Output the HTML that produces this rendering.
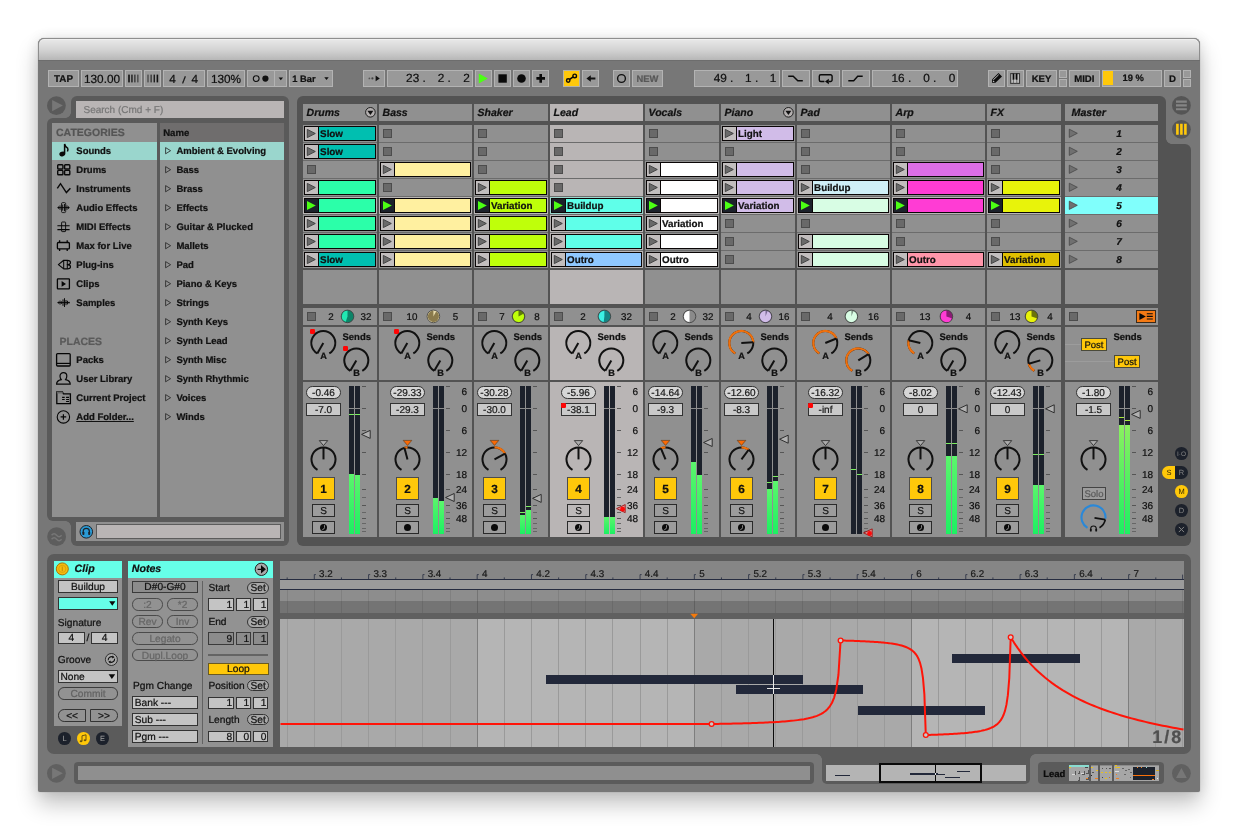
<!DOCTYPE html>
<html lang="en"><head><meta charset="utf-8"><title>Live Set</title>
<style>
html,body{margin:0;padding:0;background:#fff}
#root{position:relative;width:1238px;height:831px;overflow:hidden;background:#fff;will-change:transform;text-rendering:geometricPrecision;font-family:"Liberation Sans",sans-serif;color:#111}
#root div{position:absolute}
#win{left:38.4px;top:38px;width:1161.2px;height:754.3px;background:#777777;border-radius:6px 6px 2.5px 2.5px;box-shadow:0 12px 22px rgba(0,0,0,.24),0 0 14px rgba(0,0,0,.09),0 0 1px rgba(0,0,0,.45)}
#title{left:38.4px;top:38px;width:1161.2px;height:22.2px;border-radius:6px 6px 0 0;background:linear-gradient(#e9e9e9,#d4d4d4 50%,#b7b7b7);box-shadow:inset 0 1px 0 #efefef,0 0.8px 0 #6a6a6a;border:1px solid #8e8e8e;border-bottom:none;box-sizing:border-box}
.tb{background:#999;border:1px solid #b3b3b3;box-sizing:border-box}
.t{height:20px;line-height:20px;white-space:nowrap;-webkit-text-stroke:.22px}
.c{text-align:center}
.r{text-align:right}
svg{position:absolute;left:0;top:0}
</style></head><body>
<div id="root">
<div id="win"></div>
<div id="title"></div>
<div class="tb" style="left:48px;top:70.2px;width:31px;height:16.4px;"></div>
<div class="t c" style="left:48px;width:31px;top:70px;font-weight:bold;font-size:9.8px">TAP</div>
<div class="tb" style="left:81px;top:70.2px;width:42px;height:16.4px;"></div>
<div class="t c" style="left:81px;width:42px;top:69px;font-size:11.8px">130.00</div>
<div class="tb" style="left:125px;top:70.2px;width:17px;height:16.4px;"></div>
<div class="tb" style="left:144.4px;top:70.2px;width:16.6px;height:16.4px;"></div>
<div class="tb" style="left:163px;top:70.2px;width:41.5px;height:16.4px;"></div>
<div class="t c" style="left:163px;width:41.5px;top:69px;font-size:11.8px">4&nbsp;&nbsp;<span style="font-size:9px;font-style:italic;font-weight:bold">/</span>&nbsp;&nbsp;4</div>
<div class="tb" style="left:207px;top:70.2px;width:38px;height:16.4px;"></div>
<div class="t c" style="left:207px;width:38px;top:69px;font-size:11.8px">130%</div>
<div class="tb" style="left:247px;top:70.2px;width:28px;height:16.4px;"></div>
<div class="tb" style="left:275px;top:70.2px;width:11.5px;height:16.4px;border-left:none"></div>
<div class="tb" style="left:288.6px;top:70.2px;width:44.4px;height:16.4px;"></div>
<div class="t" style="left:292.3px;top:69px;font-weight:bold;font-size:9.3px">1 Bar</div>
<div class="tb" style="left:363.2px;top:70.2px;width:21.5px;height:16.4px;"></div>
<div class="tb" style="left:387px;top:70.2px;width:86px;height:16.4px;"></div>
<div class="t r" style="left:225.8px;width:200px;top:68px;font-size:11.8px">23 .</div>
<div class="t r" style="left:250.9px;width:200px;top:68px;font-size:11.8px">2 .</div>
<div class="t r" style="left:269.7px;width:200px;top:68px;font-size:11.8px">2</div>
<div class="tb" style="left:475px;top:70.2px;width:17px;height:16.4px;"></div>
<div class="tb" style="left:494px;top:70.2px;width:17px;height:16.4px;"></div>
<div class="tb" style="left:513px;top:70.2px;width:17px;height:16.4px;"></div>
<div class="tb" style="left:532px;top:70.2px;width:17px;height:16.4px;"></div>
<div class="tb" style="left:563px;top:70.2px;width:17px;height:16.4px;background:#ffc80a;border-color:#b8b4a4"></div>
<div class="tb" style="left:582px;top:70.2px;width:17px;height:16.4px;"></div>
<div class="tb" style="left:613px;top:70.2px;width:17px;height:16.4px;"></div>
<div class="tb" style="left:632px;top:70.2px;width:31px;height:16.4px;"></div>
<div class="t c" style="left:632px;width:31px;top:69px;font-weight:bold;font-size:9.4px;color:#585858">NEW</div>
<div class="tb" style="left:694px;top:70.2px;width:86px;height:16.4px;"></div>
<div class="t r" style="left:533.4px;width:200px;top:68px;font-size:11.8px">49 .</div>
<div class="t r" style="left:558.2px;width:200px;top:68px;font-size:11.8px">1 .</div>
<div class="t r" style="left:576.3px;width:200px;top:68px;font-size:11.8px">1</div>
<div class="tb" style="left:782px;top:70.2px;width:28px;height:16.4px;"></div>
<div class="tb" style="left:812.3px;top:70.2px;width:27.7px;height:16.4px;"></div>
<div class="tb" style="left:842.2px;top:70.2px;width:27.8px;height:16.4px;"></div>
<div class="tb" style="left:872px;top:70.2px;width:85.7px;height:16.4px;"></div>
<div class="t r" style="left:711.2px;width:200px;top:68px;font-size:11.8px">16 .</div>
<div class="t r" style="left:736.3px;width:200px;top:68px;font-size:11.8px">0 .</div>
<div class="t r" style="left:755.2px;width:200px;top:68px;font-size:11.8px">0</div>
<div class="tb" style="left:988.2px;top:70.2px;width:16.8px;height:16.4px;"></div>
<div class="tb" style="left:1007px;top:70.2px;width:16.8px;height:16.4px;"></div>
<div class="tb" style="left:1026px;top:70.2px;width:31px;height:16.4px;"></div>
<div class="t c" style="left:1026px;width:31px;top:70px;font-weight:bold;font-size:9.6px">KEY</div>
<div class="tb" style="left:1059px;top:70.2px;width:8px;height:7.4px;"></div>
<div class="tb" style="left:1059px;top:79.3px;width:8px;height:7.3px;"></div>
<div class="tb" style="left:1069px;top:70.2px;width:30.6px;height:16.4px;"></div>
<div class="t c" style="left:1069px;width:30.6px;top:70px;font-weight:bold;font-size:9.6px">MIDI</div>
<div class="tb" style="left:1102px;top:70.2px;width:60px;height:16.4px;"></div>
<div style="left:1103.2px;top:71.3px;width:9.8px;height:14.2px;background:#ffc80a"></div>
<div class="t c" style="left:1104.4px;width:57.6px;top:68px;font-weight:bold;font-size:9.4px">19 %</div>
<div class="tb" style="left:1163.8px;top:70.2px;width:17.2px;height:16.4px;"></div>
<div class="t c" style="left:1163.8px;width:17.2px;top:70px;font-weight:bold;font-size:9.6px">D</div>
<div class="tb" style="left:1183px;top:70.2px;width:8px;height:7.4px;"></div>
<div class="tb" style="left:1183px;top:79.3px;width:8px;height:7.3px;"></div>
<div style="left:70.8px;top:96px;width:218.2px;height:34px;background:#5a5a5a;border-radius:6px 6px 0 0"></div>
<div style="left:47px;top:117.8px;width:242px;height:403.2px;background:#5a5a5a;border-radius:6px 0 0 6px"></div>
<div style="left:70.8px;top:515px;width:218.2px;height:30.6px;background:#5a5a5a;border-radius:0 0 6px 6px"></div>
<div style="left:64.8px;top:111.8px;width:6px;height:6px;background:radial-gradient(circle at 0 0,transparent 5.6px,#5a5a5a 6.2px)"></div>
<div style="left:64.8px;top:521px;width:6px;height:6px;background:radial-gradient(circle at 0 100%,transparent 5.6px,#5a5a5a 6.2px)"></div>
<div style="left:75.7px;top:101.4px;width:208.3px;height:16.4px;background:#b9b5b5"></div>
<div class="t" style="left:83.5px;top:101px;font-size:10px;color:#777">Search (Cmd + F)</div>
<div style="left:51.5px;top:123px;width:105.5px;height:393.5px;background:#909090"></div>
<div style="left:159.7px;top:123px;width:124.3px;height:393.5px;background:#909090"></div>
<div style="left:159.7px;top:123px;width:124.3px;height:18.6px;background:#6f6d6d"></div>
<div class="t" style="left:56px;top:123px;font-weight:bold;font-size:10.5px;color:#555">CATEGORIES</div>
<div class="t" style="left:163.2px;top:124px;font-weight:bold;font-size:9.6px;color:#111">Name</div>
<div style="left:51.5px;top:142.2px;width:105.5px;height:18px;background:#9ad6cd"></div>
<div style="left:159.7px;top:142.2px;width:124.3px;height:18px;background:#9ad6cd"></div>
<div class="t" style="left:76.3px;top:142px;font-weight:bold;font-size:9.5px">Sounds</div>
<div class="t" style="left:76.3px;top:161px;font-weight:bold;font-size:9.5px">Drums</div>
<div class="t" style="left:76.3px;top:180px;font-weight:bold;font-size:9.5px">Instruments</div>
<div class="t" style="left:76.3px;top:199px;font-weight:bold;font-size:9.5px">Audio Effects</div>
<div class="t" style="left:76.3px;top:218px;font-weight:bold;font-size:9.5px">MIDI Effects</div>
<div class="t" style="left:76.3px;top:237px;font-weight:bold;font-size:9.5px">Max for Live</div>
<div class="t" style="left:76.3px;top:256px;font-weight:bold;font-size:9.5px">Plug-ins</div>
<div class="t" style="left:76.3px;top:275px;font-weight:bold;font-size:9.5px">Clips</div>
<div class="t" style="left:76.3px;top:294px;font-weight:bold;font-size:9.5px">Samples</div>
<div class="t" style="left:59.5px;top:332px;font-weight:bold;font-size:10.5px;color:#5a5a5a">PLACES</div>
<div class="t" style="left:76.3px;top:351px;font-weight:bold;font-size:9.5px">Packs</div>
<div class="t" style="left:76.3px;top:370px;font-weight:bold;font-size:9.5px">User Library</div>
<div class="t" style="left:76.3px;top:389px;font-weight:bold;font-size:9.5px">Current Project</div>
<div class="t" style="left:76.3px;top:408px;font-weight:bold;font-size:9.5px;text-decoration:underline">Add Folder...</div>
<div class="t" style="left:176.4px;top:142px;font-weight:bold;font-size:9.5px">Ambient &amp; Evolving</div>
<div class="t" style="left:176.4px;top:161px;font-weight:bold;font-size:9.5px">Bass</div>
<div class="t" style="left:176.4px;top:180px;font-weight:bold;font-size:9.5px">Brass</div>
<div class="t" style="left:176.4px;top:199px;font-weight:bold;font-size:9.5px">Effects</div>
<div class="t" style="left:176.4px;top:218px;font-weight:bold;font-size:9.5px">Guitar &amp; Plucked</div>
<div class="t" style="left:176.4px;top:237px;font-weight:bold;font-size:9.5px">Mallets</div>
<div class="t" style="left:176.4px;top:256px;font-weight:bold;font-size:9.5px">Pad</div>
<div class="t" style="left:176.4px;top:275px;font-weight:bold;font-size:9.5px">Piano &amp; Keys</div>
<div class="t" style="left:176.4px;top:294px;font-weight:bold;font-size:9.5px">Strings</div>
<div class="t" style="left:176.4px;top:313px;font-weight:bold;font-size:9.5px">Synth Keys</div>
<div class="t" style="left:176.4px;top:332px;font-weight:bold;font-size:9.5px">Synth Lead</div>
<div class="t" style="left:176.4px;top:351px;font-weight:bold;font-size:9.5px">Synth Misc</div>
<div class="t" style="left:176.4px;top:370px;font-weight:bold;font-size:9.5px">Synth Rhythmic</div>
<div class="t" style="left:176.4px;top:389px;font-weight:bold;font-size:9.5px">Voices</div>
<div class="t" style="left:176.4px;top:408px;font-weight:bold;font-size:9.5px">Winds</div>
<div style="left:76.2px;top:522.3px;width:208.1px;height:18.7px;background:#909090"></div>
<div style="left:96px;top:524.2px;width:185px;height:14.8px;background:#b9b5b5;border:1px solid #5c5c5c;box-sizing:border-box"></div>
<div style="left:297.3px;top:96px;width:868.7px;height:449.6px;background:#535353;border-radius:6px 6px 0 6px"></div>
<div style="left:1150px;top:143.7px;width:40.8px;height:401.9px;background:#535353;border-radius:0 6px 6px 0"></div>
<div style="left:1166px;top:137.7px;width:6px;height:6px;background:radial-gradient(circle at 100% 0,transparent 5.6px,#535353 6.2px)"></div>
<div style="left:303px;top:104px;width:74px;height:17px;background:#909090"></div>
<div class="t" style="left:306.6px;top:103px;font-weight:bold;font-style:italic;font-size:10.5px">Drums</div>
<div style="left:303px;top:124.6px;width:74px;height:143.4px;background:#6c6c6c"></div>
<div style="left:303px;top:124.6px;width:74px;height:17.2px;background:#909090"></div>
<div style="left:304.1px;top:125.9px;width:71.8px;height:15px;background:#0a0606"></div>
<div style="left:305.1px;top:126.9px;width:13px;height:13px;background:#c2bebe"></div>
<div style="left:318.9px;top:126.9px;width:56.1px;height:13px;background:#00bfb0"></div>
<div class="t" style="left:320.1px;top:125px;font-weight:bold;font-size:9.8px;color:#111">Slow</div>
<div style="left:303px;top:142.6px;width:74px;height:17.2px;background:#909090"></div>
<div style="left:304.1px;top:143.9px;width:71.8px;height:15px;background:#0a0606"></div>
<div style="left:305.1px;top:144.9px;width:13px;height:13px;background:#c2bebe"></div>
<div style="left:318.9px;top:144.9px;width:56.1px;height:13px;background:#00bfb0"></div>
<div class="t" style="left:320.1px;top:143px;font-weight:bold;font-size:9.8px;color:#111">Slow</div>
<div style="left:303px;top:160.6px;width:74px;height:17.2px;background:#909090"></div>
<div style="left:307.4px;top:165.2px;width:8.8px;height:8.6px;background:#696969;border:1px solid #4c4c4c;box-sizing:border-box"></div>
<div style="left:303px;top:178.6px;width:74px;height:17.2px;background:#909090"></div>
<div style="left:304.1px;top:179.9px;width:71.8px;height:15px;background:#0a0606"></div>
<div style="left:305.1px;top:180.9px;width:13px;height:13px;background:#c2bebe"></div>
<div style="left:318.9px;top:180.9px;width:56.1px;height:13px;background:#2bffa9"></div>
<div style="left:303px;top:196.6px;width:74px;height:17.2px;background:#b9b5b5"></div>
<div style="left:304.1px;top:197.9px;width:71.8px;height:15px;background:#0a0606"></div>
<div style="left:305.1px;top:198.9px;width:13px;height:13px;background:#1c212b"></div>
<div style="left:318.9px;top:198.9px;width:56.1px;height:13px;background:#2bffa9"></div>
<div style="left:303px;top:214.6px;width:74px;height:17.2px;background:#909090"></div>
<div style="left:304.1px;top:215.9px;width:71.8px;height:15px;background:#0a0606"></div>
<div style="left:305.1px;top:216.9px;width:13px;height:13px;background:#c2bebe"></div>
<div style="left:318.9px;top:216.9px;width:56.1px;height:13px;background:#2bffa9"></div>
<div style="left:303px;top:232.6px;width:74px;height:17.2px;background:#909090"></div>
<div style="left:304.1px;top:233.9px;width:71.8px;height:15px;background:#0a0606"></div>
<div style="left:305.1px;top:234.9px;width:13px;height:13px;background:#c2bebe"></div>
<div style="left:318.9px;top:234.9px;width:56.1px;height:13px;background:#2bffa9"></div>
<div style="left:303px;top:250.6px;width:74px;height:17.2px;background:#909090"></div>
<div style="left:304.1px;top:251.9px;width:71.8px;height:15px;background:#0a0606"></div>
<div style="left:305.1px;top:252.9px;width:13px;height:13px;background:#c2bebe"></div>
<div style="left:318.9px;top:252.9px;width:56.1px;height:13px;background:#00bfb0"></div>
<div class="t" style="left:320.1px;top:251px;font-weight:bold;font-size:9.8px;color:#111">Slow</div>
<div style="left:303px;top:270.2px;width:74px;height:33.8px;background:#909090"></div>
<div style="left:303px;top:308px;width:74px;height:16.7px;background:#909090"></div>
<div style="left:307.2px;top:312.2px;width:8.8px;height:8.6px;background:#696969;border:1px solid #4c4c4c;box-sizing:border-box"></div>
<div class="t c" style="left:321px;width:20px;top:308px;font-size:9.8px">2</div>
<div class="t c" style="left:355.9px;width:20px;top:308px;font-size:9.8px">32</div>
<div style="left:303px;top:327px;width:74px;height:53px;background:#909090"></div>
<div class="t c" style="left:317.3px;width:12.4px;top:346px;font-weight:bold;font-size:9.2px">A</div>
<div class="t c" style="left:350.3px;width:12.4px;top:363px;font-weight:bold;font-size:9.2px">B</div>
<div style="left:310.1px;top:329px;width:5px;height:5px;background:#ff0505;border-radius:1.2px"></div>
<div style="left:343.1px;top:346.4px;width:5px;height:5px;background:#ff0505;border-radius:1.2px"></div>
<div class="t" style="left:342.5px;top:328px;font-weight:bold;font-size:9.5px">Sends</div>
<div style="left:303px;top:381.8px;width:74px;height:155.7px;background:#909090"></div>
<div style="left:306px;top:386px;width:35px;height:12.7px;background:#d6d6d6;border:1px solid #333;border-radius:6.4px;box-sizing:border-box"></div>
<div class="t c" style="left:306px;width:35px;top:384px;font-size:10px;color:#1a1a1a">-0.46</div>
<div style="left:306px;top:403.2px;width:35px;height:12.5px;background:#c9c9c9;border:1px solid #333;box-sizing:border-box"></div>
<div class="t c" style="left:306px;width:35px;top:401px;font-size:10px;color:#1a1a1a">-7.0</div>
<div style="left:312.2px;top:477.1px;width:22.6px;height:22.7px;background:#ffc80a;border:1px solid #4c4c4c;box-sizing:border-box"></div>
<div class="t c" style="left:312.2px;width:22.6px;top:479px;font-weight:bold;font-size:11.8px">1</div>
<div style="left:312.2px;top:504.2px;width:22.6px;height:12.6px;background:#9c9c9c;border:1px solid #2a2a2a;box-sizing:border-box"></div>
<div class="t c" style="left:312.2px;width:22.6px;top:502px;font-size:10px">S</div>
<div style="left:312.2px;top:521.1px;width:22.6px;height:12.6px;background:#9c9c9c;border:1px solid #2a2a2a;box-sizing:border-box"></div>
<div style="left:349px;top:386px;width:5px;height:148px;background:#1c212b"></div>
<div style="left:349px;top:474.2px;width:5px;height:59.8px;background:linear-gradient(#5cf56c,#1cf062)"></div>
<div style="left:349px;top:413.9px;width:5px;height:1.3px;background:#7cf060"></div>
<div style="left:355px;top:386px;width:5px;height:148px;background:#1c212b"></div>
<div style="left:355px;top:475px;width:5px;height:59px;background:linear-gradient(#5cf56c,#1cf062)"></div>
<div style="left:355px;top:413.9px;width:5px;height:1.3px;background:#7cf060"></div>
<div style="left:349px;top:408px;width:11px;height:0.9px;background:#8c8c8c"></div>
<div style="left:362px;top:386.1px;width:4px;height:1px;background:#555"></div>
<div style="left:362px;top:407.8px;width:4px;height:1px;background:#555"></div>
<div style="left:362px;top:429.7px;width:4px;height:1px;background:#555"></div>
<div style="left:362px;top:451.8px;width:4px;height:1px;background:#555"></div>
<div style="left:362px;top:473.5px;width:4px;height:1px;background:#555"></div>
<div style="left:362px;top:488.8px;width:4px;height:1px;background:#555"></div>
<div style="left:362px;top:504.5px;width:4px;height:1px;background:#555"></div>
<div style="left:362px;top:517.9px;width:4px;height:1px;background:#555"></div>
<div style="left:362px;top:497.05px;width:4px;height:0.9px;background:#666"></div>
<div style="left:362px;top:511.85px;width:4px;height:0.9px;background:#666"></div>
<div style="left:362px;top:522.95px;width:4px;height:0.9px;background:#666"></div>
<div style="left:362px;top:527.95px;width:4px;height:0.9px;background:#666"></div>
<div style="left:362px;top:530.95px;width:4px;height:0.9px;background:#666"></div>
<div style="left:379px;top:104px;width:93px;height:17px;background:#909090"></div>
<div class="t" style="left:382.6px;top:103px;font-weight:bold;font-style:italic;font-size:10.5px">Bass</div>
<div style="left:379px;top:124.6px;width:93px;height:143.4px;background:#6c6c6c"></div>
<div style="left:379px;top:124.6px;width:93px;height:17.2px;background:#909090"></div>
<div style="left:383.4px;top:129.2px;width:8.8px;height:8.6px;background:#696969;border:1px solid #4c4c4c;box-sizing:border-box"></div>
<div style="left:379px;top:142.6px;width:93px;height:17.2px;background:#909090"></div>
<div style="left:383.4px;top:147.2px;width:8.8px;height:8.6px;background:#696969;border:1px solid #4c4c4c;box-sizing:border-box"></div>
<div style="left:379px;top:160.6px;width:93px;height:17.2px;background:#909090"></div>
<div style="left:380.1px;top:161.9px;width:90.8px;height:15px;background:#0a0606"></div>
<div style="left:381.1px;top:162.9px;width:13px;height:13px;background:#c2bebe"></div>
<div style="left:394.9px;top:162.9px;width:75.1px;height:13px;background:#fff0a0"></div>
<div style="left:379px;top:178.6px;width:93px;height:17.2px;background:#909090"></div>
<div style="left:383.4px;top:183.2px;width:8.8px;height:8.6px;background:#696969;border:1px solid #4c4c4c;box-sizing:border-box"></div>
<div style="left:379px;top:196.6px;width:93px;height:17.2px;background:#b9b5b5"></div>
<div style="left:380.1px;top:197.9px;width:90.8px;height:15px;background:#0a0606"></div>
<div style="left:381.1px;top:198.9px;width:13px;height:13px;background:#1c212b"></div>
<div style="left:394.9px;top:198.9px;width:75.1px;height:13px;background:#fff0a0"></div>
<div style="left:379px;top:214.6px;width:93px;height:17.2px;background:#909090"></div>
<div style="left:380.1px;top:215.9px;width:90.8px;height:15px;background:#0a0606"></div>
<div style="left:381.1px;top:216.9px;width:13px;height:13px;background:#c2bebe"></div>
<div style="left:394.9px;top:216.9px;width:75.1px;height:13px;background:#fff0a0"></div>
<div style="left:379px;top:232.6px;width:93px;height:17.2px;background:#909090"></div>
<div style="left:380.1px;top:233.9px;width:90.8px;height:15px;background:#0a0606"></div>
<div style="left:381.1px;top:234.9px;width:13px;height:13px;background:#c2bebe"></div>
<div style="left:394.9px;top:234.9px;width:75.1px;height:13px;background:#fff0a0"></div>
<div style="left:379px;top:250.6px;width:93px;height:17.2px;background:#909090"></div>
<div style="left:380.1px;top:251.9px;width:90.8px;height:15px;background:#0a0606"></div>
<div style="left:381.1px;top:252.9px;width:13px;height:13px;background:#c2bebe"></div>
<div style="left:394.9px;top:252.9px;width:75.1px;height:13px;background:#fff0a0"></div>
<div style="left:379px;top:270.2px;width:93px;height:33.8px;background:#909090"></div>
<div style="left:379px;top:308px;width:93px;height:16.7px;background:#909090"></div>
<div style="left:383.2px;top:312.2px;width:8.8px;height:8.6px;background:#696969;border:1px solid #4c4c4c;box-sizing:border-box"></div>
<div class="t c" style="left:402px;width:20px;top:308px;font-size:9.8px">10</div>
<div class="t c" style="left:445.5px;width:20px;top:308px;font-size:9.8px">5</div>
<div style="left:379px;top:327px;width:93px;height:53px;background:#909090"></div>
<div class="t c" style="left:401.3px;width:12.4px;top:346px;font-weight:bold;font-size:9.2px">A</div>
<div class="t c" style="left:434.3px;width:12.4px;top:363px;font-weight:bold;font-size:9.2px">B</div>
<div style="left:394.1px;top:329px;width:5px;height:5px;background:#ff0505;border-radius:1.2px"></div>
<div class="t" style="left:426.5px;top:328px;font-weight:bold;font-size:9.5px">Sends</div>
<div style="left:379px;top:381.8px;width:93px;height:155.7px;background:#909090"></div>
<div style="left:390px;top:386px;width:35px;height:12.7px;background:#d6d6d6;border:1px solid #333;border-radius:6.4px;box-sizing:border-box"></div>
<div class="t c" style="left:390px;width:35px;top:384px;font-size:10px;color:#1a1a1a">-29.33</div>
<div style="left:390px;top:403.2px;width:35px;height:12.5px;background:#c9c9c9;border:1px solid #333;box-sizing:border-box"></div>
<div class="t c" style="left:390px;width:35px;top:401px;font-size:10px;color:#1a1a1a">-29.3</div>
<div style="left:396.2px;top:477.1px;width:22.6px;height:22.7px;background:#ffc80a;border:1px solid #4c4c4c;box-sizing:border-box"></div>
<div class="t c" style="left:396.2px;width:22.6px;top:479px;font-weight:bold;font-size:11.8px">2</div>
<div style="left:396.2px;top:504.2px;width:22.6px;height:12.6px;background:#9c9c9c;border:1px solid #2a2a2a;box-sizing:border-box"></div>
<div class="t c" style="left:396.2px;width:22.6px;top:502px;font-size:10px">S</div>
<div style="left:396.2px;top:521.1px;width:22.6px;height:12.6px;background:#9c9c9c;border:1px solid #2a2a2a;box-sizing:border-box"></div>
<div style="left:433px;top:386px;width:5px;height:148px;background:#1c212b"></div>
<div style="left:433px;top:498px;width:5px;height:36px;background:linear-gradient(#5cf56c,#1cf062)"></div>
<div style="left:439px;top:386px;width:5px;height:148px;background:#1c212b"></div>
<div style="left:439px;top:500.9px;width:5px;height:33.1px;background:linear-gradient(#5cf56c,#1cf062)"></div>
<div style="left:433px;top:408px;width:11px;height:0.9px;background:#8c8c8c"></div>
<div style="left:446px;top:386.1px;width:4px;height:1px;background:#555"></div>
<div style="left:446px;top:407.8px;width:4px;height:1px;background:#555"></div>
<div style="left:446px;top:429.7px;width:4px;height:1px;background:#555"></div>
<div style="left:446px;top:451.8px;width:4px;height:1px;background:#555"></div>
<div style="left:446px;top:473.5px;width:4px;height:1px;background:#555"></div>
<div style="left:446px;top:488.8px;width:4px;height:1px;background:#555"></div>
<div style="left:446px;top:504.5px;width:4px;height:1px;background:#555"></div>
<div style="left:446px;top:517.9px;width:4px;height:1px;background:#555"></div>
<div style="left:446px;top:497.05px;width:4px;height:0.9px;background:#666"></div>
<div style="left:446px;top:511.85px;width:4px;height:0.9px;background:#666"></div>
<div style="left:446px;top:522.95px;width:4px;height:0.9px;background:#666"></div>
<div style="left:446px;top:527.95px;width:4px;height:0.9px;background:#666"></div>
<div style="left:446px;top:530.95px;width:4px;height:0.9px;background:#666"></div>
<div class="t r" style="left:267px;width:200px;top:383px;font-size:10px;color:#111">6</div>
<div class="t r" style="left:267px;width:200px;top:400px;font-size:10px;color:#111">0</div>
<div class="t r" style="left:267px;width:200px;top:422px;font-size:10px;color:#111">6</div>
<div class="t r" style="left:267px;width:200px;top:444px;font-size:10px;color:#111">12</div>
<div class="t r" style="left:267px;width:200px;top:466px;font-size:10px;color:#111">18</div>
<div class="t r" style="left:267px;width:200px;top:481px;font-size:10px;color:#111">24</div>
<div class="t r" style="left:267px;width:200px;top:497px;font-size:10px;color:#111">36</div>
<div class="t r" style="left:267px;width:200px;top:510px;font-size:10px;color:#111">48</div>
<div style="left:474px;top:104px;width:74px;height:17px;background:#909090"></div>
<div class="t" style="left:477.6px;top:103px;font-weight:bold;font-style:italic;font-size:10.5px">Shaker</div>
<div style="left:474px;top:124.6px;width:74px;height:143.4px;background:#6c6c6c"></div>
<div style="left:474px;top:124.6px;width:74px;height:17.2px;background:#909090"></div>
<div style="left:478.4px;top:129.2px;width:8.8px;height:8.6px;background:#696969;border:1px solid #4c4c4c;box-sizing:border-box"></div>
<div style="left:474px;top:142.6px;width:74px;height:17.2px;background:#909090"></div>
<div style="left:478.4px;top:147.2px;width:8.8px;height:8.6px;background:#696969;border:1px solid #4c4c4c;box-sizing:border-box"></div>
<div style="left:474px;top:160.6px;width:74px;height:17.2px;background:#909090"></div>
<div style="left:478.4px;top:165.2px;width:8.8px;height:8.6px;background:#696969;border:1px solid #4c4c4c;box-sizing:border-box"></div>
<div style="left:474px;top:178.6px;width:74px;height:17.2px;background:#909090"></div>
<div style="left:475.1px;top:179.9px;width:71.8px;height:15px;background:#0a0606"></div>
<div style="left:476.1px;top:180.9px;width:13px;height:13px;background:#c2bebe"></div>
<div style="left:489.9px;top:180.9px;width:56.1px;height:13px;background:#bfff0a"></div>
<div style="left:474px;top:196.6px;width:74px;height:17.2px;background:#b9b5b5"></div>
<div style="left:475.1px;top:197.9px;width:71.8px;height:15px;background:#0a0606"></div>
<div style="left:476.1px;top:198.9px;width:13px;height:13px;background:#1c212b"></div>
<div style="left:489.9px;top:198.9px;width:56.1px;height:13px;background:#bfff0a"></div>
<div class="t" style="left:491.1px;top:197px;font-weight:bold;font-size:9.8px;color:#111">Variation</div>
<div style="left:474px;top:214.6px;width:74px;height:17.2px;background:#909090"></div>
<div style="left:475.1px;top:215.9px;width:71.8px;height:15px;background:#0a0606"></div>
<div style="left:476.1px;top:216.9px;width:13px;height:13px;background:#c2bebe"></div>
<div style="left:489.9px;top:216.9px;width:56.1px;height:13px;background:#bfff0a"></div>
<div style="left:474px;top:232.6px;width:74px;height:17.2px;background:#909090"></div>
<div style="left:475.1px;top:233.9px;width:71.8px;height:15px;background:#0a0606"></div>
<div style="left:476.1px;top:234.9px;width:13px;height:13px;background:#c2bebe"></div>
<div style="left:489.9px;top:234.9px;width:56.1px;height:13px;background:#bfff0a"></div>
<div style="left:474px;top:250.6px;width:74px;height:17.2px;background:#909090"></div>
<div style="left:475.1px;top:251.9px;width:71.8px;height:15px;background:#0a0606"></div>
<div style="left:476.1px;top:252.9px;width:13px;height:13px;background:#c2bebe"></div>
<div style="left:489.9px;top:252.9px;width:56.1px;height:13px;background:#bfff0a"></div>
<div style="left:474px;top:270.2px;width:74px;height:33.8px;background:#909090"></div>
<div style="left:474px;top:308px;width:74px;height:16.7px;background:#909090"></div>
<div style="left:478.2px;top:312.2px;width:8.8px;height:8.6px;background:#696969;border:1px solid #4c4c4c;box-sizing:border-box"></div>
<div class="t c" style="left:492px;width:20px;top:308px;font-size:9.8px">7</div>
<div class="t c" style="left:526.9px;width:20px;top:308px;font-size:9.8px">8</div>
<div style="left:474px;top:327px;width:74px;height:53px;background:#909090"></div>
<div class="t c" style="left:488.3px;width:12.4px;top:346px;font-weight:bold;font-size:9.2px">A</div>
<div class="t c" style="left:521.3px;width:12.4px;top:363px;font-weight:bold;font-size:9.2px">B</div>
<div class="t" style="left:513.5px;top:328px;font-weight:bold;font-size:9.5px">Sends</div>
<div style="left:474px;top:381.8px;width:74px;height:155.7px;background:#909090"></div>
<div style="left:477px;top:386px;width:35px;height:12.7px;background:#d6d6d6;border:1px solid #333;border-radius:6.4px;box-sizing:border-box"></div>
<div class="t c" style="left:477px;width:35px;top:384px;font-size:10px;color:#1a1a1a">-30.28</div>
<div style="left:477px;top:403.2px;width:35px;height:12.5px;background:#c9c9c9;border:1px solid #333;box-sizing:border-box"></div>
<div class="t c" style="left:477px;width:35px;top:401px;font-size:10px;color:#1a1a1a">-30.0</div>
<div style="left:483.2px;top:477.1px;width:22.6px;height:22.7px;background:#ffc80a;border:1px solid #4c4c4c;box-sizing:border-box"></div>
<div class="t c" style="left:483.2px;width:22.6px;top:479px;font-weight:bold;font-size:11.8px">3</div>
<div style="left:483.2px;top:504.2px;width:22.6px;height:12.6px;background:#9c9c9c;border:1px solid #2a2a2a;box-sizing:border-box"></div>
<div class="t c" style="left:483.2px;width:22.6px;top:502px;font-size:10px">S</div>
<div style="left:483.2px;top:521.1px;width:22.6px;height:12.6px;background:#9c9c9c;border:1px solid #2a2a2a;box-sizing:border-box"></div>
<div style="left:520px;top:386px;width:5px;height:148px;background:#1c212b"></div>
<div style="left:520px;top:515px;width:5px;height:19px;background:linear-gradient(#5cf56c,#1cf062)"></div>
<div style="left:520px;top:511.9px;width:5px;height:1.3px;background:#7cf060"></div>
<div style="left:526px;top:386px;width:5px;height:148px;background:#1c212b"></div>
<div style="left:526px;top:510px;width:5px;height:24px;background:linear-gradient(#5cf56c,#1cf062)"></div>
<div style="left:526px;top:505.8px;width:5px;height:1.3px;background:#7cf060"></div>
<div style="left:520px;top:408px;width:11px;height:0.9px;background:#8c8c8c"></div>
<div style="left:533px;top:386.1px;width:4px;height:1px;background:#555"></div>
<div style="left:533px;top:407.8px;width:4px;height:1px;background:#555"></div>
<div style="left:533px;top:429.7px;width:4px;height:1px;background:#555"></div>
<div style="left:533px;top:451.8px;width:4px;height:1px;background:#555"></div>
<div style="left:533px;top:473.5px;width:4px;height:1px;background:#555"></div>
<div style="left:533px;top:488.8px;width:4px;height:1px;background:#555"></div>
<div style="left:533px;top:504.5px;width:4px;height:1px;background:#555"></div>
<div style="left:533px;top:517.9px;width:4px;height:1px;background:#555"></div>
<div style="left:533px;top:497.05px;width:4px;height:0.9px;background:#666"></div>
<div style="left:533px;top:511.85px;width:4px;height:0.9px;background:#666"></div>
<div style="left:533px;top:522.95px;width:4px;height:0.9px;background:#666"></div>
<div style="left:533px;top:527.95px;width:4px;height:0.9px;background:#666"></div>
<div style="left:533px;top:530.95px;width:4px;height:0.9px;background:#666"></div>
<div style="left:550px;top:104px;width:93px;height:17px;background:#b9b5b5"></div>
<div class="t" style="left:553.6px;top:103px;font-weight:bold;font-style:italic;font-size:10.5px">Lead</div>
<div style="left:550px;top:124.6px;width:93px;height:143.4px;background:#6c6c6c"></div>
<div style="left:550px;top:124.6px;width:93px;height:17.2px;background:#b9b5b5"></div>
<div style="left:554.4px;top:129.2px;width:8.8px;height:8.6px;background:#696969;border:1px solid #4c4c4c;box-sizing:border-box"></div>
<div style="left:550px;top:142.6px;width:93px;height:17.2px;background:#b9b5b5"></div>
<div style="left:554.4px;top:147.2px;width:8.8px;height:8.6px;background:#696969;border:1px solid #4c4c4c;box-sizing:border-box"></div>
<div style="left:550px;top:160.6px;width:93px;height:17.2px;background:#b9b5b5"></div>
<div style="left:554.4px;top:165.2px;width:8.8px;height:8.6px;background:#696969;border:1px solid #4c4c4c;box-sizing:border-box"></div>
<div style="left:550px;top:178.6px;width:93px;height:17.2px;background:#b9b5b5"></div>
<div style="left:554.4px;top:183.2px;width:8.8px;height:8.6px;background:#696969;border:1px solid #4c4c4c;box-sizing:border-box"></div>
<div style="left:550px;top:196.6px;width:93px;height:17.2px;background:#9ad6cd"></div>
<div style="left:551.1px;top:197.9px;width:90.8px;height:15px;background:#0a0606"></div>
<div style="left:552.1px;top:198.9px;width:13px;height:13px;background:#1c212b"></div>
<div style="left:565.9px;top:198.9px;width:75.1px;height:13px;background:#5fffe9"></div>
<div class="t" style="left:567.1px;top:197px;font-weight:bold;font-size:9.8px;color:#111">Buildup</div>
<div style="left:550px;top:214.6px;width:93px;height:17.2px;background:#b9b5b5"></div>
<div style="left:551.1px;top:215.9px;width:90.8px;height:15px;background:#0a0606"></div>
<div style="left:552.1px;top:216.9px;width:13px;height:13px;background:#c2bebe"></div>
<div style="left:565.9px;top:216.9px;width:75.1px;height:13px;background:#5fffe9"></div>
<div style="left:550px;top:232.6px;width:93px;height:17.2px;background:#b9b5b5"></div>
<div style="left:551.1px;top:233.9px;width:90.8px;height:15px;background:#0a0606"></div>
<div style="left:552.1px;top:234.9px;width:13px;height:13px;background:#c2bebe"></div>
<div style="left:565.9px;top:234.9px;width:75.1px;height:13px;background:#5fffe9"></div>
<div style="left:550px;top:250.6px;width:93px;height:17.2px;background:#b9b5b5"></div>
<div style="left:551.1px;top:251.9px;width:90.8px;height:15px;background:#0a0606"></div>
<div style="left:552.1px;top:252.9px;width:13px;height:13px;background:#c2bebe"></div>
<div style="left:565.9px;top:252.9px;width:75.1px;height:13px;background:#8fc8ff"></div>
<div class="t" style="left:567.1px;top:251px;font-weight:bold;font-size:9.8px;color:#111">Outro</div>
<div style="left:550px;top:270.2px;width:93px;height:33.8px;background:#b9b5b5"></div>
<div style="left:550px;top:308px;width:93px;height:16.7px;background:#909090"></div>
<div style="left:554.2px;top:312.2px;width:8.8px;height:8.6px;background:#696969;border:1px solid #4c4c4c;box-sizing:border-box"></div>
<div class="t c" style="left:573px;width:20px;top:308px;font-size:9.8px">2</div>
<div class="t c" style="left:616.5px;width:20px;top:308px;font-size:9.8px">32</div>
<div style="left:550px;top:327px;width:93px;height:53px;background:#b9b5b5"></div>
<div class="t c" style="left:572.3px;width:12.4px;top:346px;font-weight:bold;font-size:9.2px">A</div>
<div class="t c" style="left:605.3px;width:12.4px;top:363px;font-weight:bold;font-size:9.2px">B</div>
<div class="t" style="left:597.5px;top:328px;font-weight:bold;font-size:9.5px">Sends</div>
<div style="left:550px;top:381.8px;width:93px;height:155.7px;background:#b9b5b5"></div>
<div style="left:561px;top:386px;width:35px;height:12.7px;background:#d6d6d6;border:1px solid #333;border-radius:6.4px;box-sizing:border-box"></div>
<div class="t c" style="left:561px;width:35px;top:384px;font-size:10px;color:#1a1a1a">-5.96</div>
<div style="left:561px;top:403.2px;width:35px;height:12.5px;background:#c9c9c9;border:1px solid #333;box-sizing:border-box"></div>
<div class="t c" style="left:561px;width:35px;top:401px;font-size:10px;color:#1a1a1a">-38.1</div>
<div style="left:560.8px;top:402.9px;width:5px;height:5px;background:#ff0505;border-radius:1.2px"></div>
<div style="left:567.2px;top:477.1px;width:22.6px;height:22.7px;background:#ffc80a;border:1px solid #4c4c4c;box-sizing:border-box"></div>
<div class="t c" style="left:567.2px;width:22.6px;top:479px;font-weight:bold;font-size:11.8px">4</div>
<div style="left:567.2px;top:504.2px;width:22.6px;height:12.6px;background:#bdb9b9;border:1px solid #2a2a2a;box-sizing:border-box"></div>
<div class="t c" style="left:567.2px;width:22.6px;top:502px;font-size:10px">S</div>
<div style="left:567.2px;top:521.1px;width:22.6px;height:12.6px;background:#bdb9b9;border:1px solid #2a2a2a;box-sizing:border-box"></div>
<div style="left:604px;top:386px;width:5px;height:148px;background:#1c212b"></div>
<div style="left:604px;top:516.6px;width:5px;height:17.4px;background:linear-gradient(#5cf56c,#1cf062)"></div>
<div style="left:610px;top:386px;width:5px;height:148px;background:#1c212b"></div>
<div style="left:610px;top:516.6px;width:5px;height:17.4px;background:linear-gradient(#5cf56c,#1cf062)"></div>
<div style="left:604px;top:408px;width:11px;height:0.9px;background:#8c8c8c"></div>
<div style="left:617px;top:386.1px;width:4px;height:1px;background:#555"></div>
<div style="left:617px;top:407.8px;width:4px;height:1px;background:#555"></div>
<div style="left:617px;top:429.7px;width:4px;height:1px;background:#555"></div>
<div style="left:617px;top:451.8px;width:4px;height:1px;background:#555"></div>
<div style="left:617px;top:473.5px;width:4px;height:1px;background:#555"></div>
<div style="left:617px;top:488.8px;width:4px;height:1px;background:#555"></div>
<div style="left:617px;top:504.5px;width:4px;height:1px;background:#555"></div>
<div style="left:617px;top:517.9px;width:4px;height:1px;background:#555"></div>
<div style="left:617px;top:497.05px;width:4px;height:0.9px;background:#666"></div>
<div style="left:617px;top:511.85px;width:4px;height:0.9px;background:#666"></div>
<div style="left:617px;top:522.95px;width:4px;height:0.9px;background:#666"></div>
<div style="left:617px;top:527.95px;width:4px;height:0.9px;background:#666"></div>
<div style="left:617px;top:530.95px;width:4px;height:0.9px;background:#666"></div>
<div class="t r" style="left:438px;width:200px;top:383px;font-size:10px;color:#111">6</div>
<div class="t r" style="left:438px;width:200px;top:400px;font-size:10px;color:#111">0</div>
<div class="t r" style="left:438px;width:200px;top:422px;font-size:10px;color:#111">6</div>
<div class="t r" style="left:438px;width:200px;top:444px;font-size:10px;color:#111">12</div>
<div class="t r" style="left:438px;width:200px;top:466px;font-size:10px;color:#111">18</div>
<div class="t r" style="left:438px;width:200px;top:481px;font-size:10px;color:#111">24</div>
<div class="t r" style="left:438px;width:200px;top:497px;font-size:10px;color:#111">36</div>
<div class="t r" style="left:438px;width:200px;top:510px;font-size:10px;color:#111">48</div>
<div style="left:645px;top:104px;width:74px;height:17px;background:#909090"></div>
<div class="t" style="left:648.6px;top:103px;font-weight:bold;font-style:italic;font-size:10.5px">Vocals</div>
<div style="left:645px;top:124.6px;width:74px;height:143.4px;background:#6c6c6c"></div>
<div style="left:645px;top:124.6px;width:74px;height:17.2px;background:#909090"></div>
<div style="left:649.4px;top:129.2px;width:8.8px;height:8.6px;background:#696969;border:1px solid #4c4c4c;box-sizing:border-box"></div>
<div style="left:645px;top:142.6px;width:74px;height:17.2px;background:#909090"></div>
<div style="left:649.4px;top:147.2px;width:8.8px;height:8.6px;background:#696969;border:1px solid #4c4c4c;box-sizing:border-box"></div>
<div style="left:645px;top:160.6px;width:74px;height:17.2px;background:#909090"></div>
<div style="left:646.1px;top:161.9px;width:71.8px;height:15px;background:#0a0606"></div>
<div style="left:647.1px;top:162.9px;width:13px;height:13px;background:#c2bebe"></div>
<div style="left:660.9px;top:162.9px;width:56.1px;height:13px;background:#ffffff"></div>
<div style="left:645px;top:178.6px;width:74px;height:17.2px;background:#909090"></div>
<div style="left:646.1px;top:179.9px;width:71.8px;height:15px;background:#0a0606"></div>
<div style="left:647.1px;top:180.9px;width:13px;height:13px;background:#c2bebe"></div>
<div style="left:660.9px;top:180.9px;width:56.1px;height:13px;background:#ffffff"></div>
<div style="left:645px;top:196.6px;width:74px;height:17.2px;background:#b9b5b5"></div>
<div style="left:646.1px;top:197.9px;width:71.8px;height:15px;background:#0a0606"></div>
<div style="left:647.1px;top:198.9px;width:13px;height:13px;background:#1c212b"></div>
<div style="left:660.9px;top:198.9px;width:56.1px;height:13px;background:#ffffff"></div>
<div style="left:645px;top:214.6px;width:74px;height:17.2px;background:#909090"></div>
<div style="left:646.1px;top:215.9px;width:71.8px;height:15px;background:#0a0606"></div>
<div style="left:647.1px;top:216.9px;width:13px;height:13px;background:#c2bebe"></div>
<div style="left:660.9px;top:216.9px;width:56.1px;height:13px;background:#ffffff"></div>
<div class="t" style="left:662.1px;top:215px;font-weight:bold;font-size:9.8px;color:#111">Variation</div>
<div style="left:645px;top:232.6px;width:74px;height:17.2px;background:#909090"></div>
<div style="left:646.1px;top:233.9px;width:71.8px;height:15px;background:#0a0606"></div>
<div style="left:647.1px;top:234.9px;width:13px;height:13px;background:#c2bebe"></div>
<div style="left:660.9px;top:234.9px;width:56.1px;height:13px;background:#ffffff"></div>
<div style="left:645px;top:250.6px;width:74px;height:17.2px;background:#909090"></div>
<div style="left:646.1px;top:251.9px;width:71.8px;height:15px;background:#0a0606"></div>
<div style="left:647.1px;top:252.9px;width:13px;height:13px;background:#c2bebe"></div>
<div style="left:660.9px;top:252.9px;width:56.1px;height:13px;background:#ffffff"></div>
<div class="t" style="left:662.1px;top:251px;font-weight:bold;font-size:9.8px;color:#111">Outro</div>
<div style="left:645px;top:270.2px;width:74px;height:33.8px;background:#909090"></div>
<div style="left:645px;top:308px;width:74px;height:16.7px;background:#909090"></div>
<div style="left:649.2px;top:312.2px;width:8.8px;height:8.6px;background:#696969;border:1px solid #4c4c4c;box-sizing:border-box"></div>
<div class="t c" style="left:663px;width:20px;top:308px;font-size:9.8px">2</div>
<div class="t c" style="left:697.9px;width:20px;top:308px;font-size:9.8px">32</div>
<div style="left:645px;top:327px;width:74px;height:53px;background:#909090"></div>
<div class="t c" style="left:659.3px;width:12.4px;top:346px;font-weight:bold;font-size:9.2px">A</div>
<div class="t c" style="left:692.3px;width:12.4px;top:363px;font-weight:bold;font-size:9.2px">B</div>
<div class="t" style="left:684.5px;top:328px;font-weight:bold;font-size:9.5px">Sends</div>
<div style="left:645px;top:381.8px;width:74px;height:155.7px;background:#909090"></div>
<div style="left:648px;top:386px;width:35px;height:12.7px;background:#d6d6d6;border:1px solid #333;border-radius:6.4px;box-sizing:border-box"></div>
<div class="t c" style="left:648px;width:35px;top:384px;font-size:10px;color:#1a1a1a">-14.64</div>
<div style="left:648px;top:403.2px;width:35px;height:12.5px;background:#c9c9c9;border:1px solid #333;box-sizing:border-box"></div>
<div class="t c" style="left:648px;width:35px;top:401px;font-size:10px;color:#1a1a1a">-9.3</div>
<div style="left:654.2px;top:477.1px;width:22.6px;height:22.7px;background:#ffc80a;border:1px solid #4c4c4c;box-sizing:border-box"></div>
<div class="t c" style="left:654.2px;width:22.6px;top:479px;font-weight:bold;font-size:11.8px">5</div>
<div style="left:654.2px;top:504.2px;width:22.6px;height:12.6px;background:#9c9c9c;border:1px solid #2a2a2a;box-sizing:border-box"></div>
<div class="t c" style="left:654.2px;width:22.6px;top:502px;font-size:10px">S</div>
<div style="left:654.2px;top:521.1px;width:22.6px;height:12.6px;background:#9c9c9c;border:1px solid #2a2a2a;box-sizing:border-box"></div>
<div style="left:691px;top:386px;width:5px;height:148px;background:#1c212b"></div>
<div style="left:691px;top:461.8px;width:5px;height:72.2px;background:linear-gradient(#5cf56c,#1cf062)"></div>
<div style="left:697px;top:386px;width:5px;height:148px;background:#1c212b"></div>
<div style="left:697px;top:474.9px;width:5px;height:59.1px;background:linear-gradient(#5cf56c,#1cf062)"></div>
<div style="left:691px;top:408px;width:11px;height:0.9px;background:#8c8c8c"></div>
<div style="left:704px;top:386.1px;width:4px;height:1px;background:#555"></div>
<div style="left:704px;top:407.8px;width:4px;height:1px;background:#555"></div>
<div style="left:704px;top:429.7px;width:4px;height:1px;background:#555"></div>
<div style="left:704px;top:451.8px;width:4px;height:1px;background:#555"></div>
<div style="left:704px;top:473.5px;width:4px;height:1px;background:#555"></div>
<div style="left:704px;top:488.8px;width:4px;height:1px;background:#555"></div>
<div style="left:704px;top:504.5px;width:4px;height:1px;background:#555"></div>
<div style="left:704px;top:517.9px;width:4px;height:1px;background:#555"></div>
<div style="left:704px;top:497.05px;width:4px;height:0.9px;background:#666"></div>
<div style="left:704px;top:511.85px;width:4px;height:0.9px;background:#666"></div>
<div style="left:704px;top:522.95px;width:4px;height:0.9px;background:#666"></div>
<div style="left:704px;top:527.95px;width:4px;height:0.9px;background:#666"></div>
<div style="left:704px;top:530.95px;width:4px;height:0.9px;background:#666"></div>
<div style="left:721px;top:104px;width:74px;height:17px;background:#909090"></div>
<div class="t" style="left:724.6px;top:103px;font-weight:bold;font-style:italic;font-size:10.5px">Piano</div>
<div style="left:721px;top:124.6px;width:74px;height:143.4px;background:#6c6c6c"></div>
<div style="left:721px;top:124.6px;width:74px;height:17.2px;background:#909090"></div>
<div style="left:722.1px;top:125.9px;width:71.8px;height:15px;background:#0a0606"></div>
<div style="left:723.1px;top:126.9px;width:13px;height:13px;background:#c2bebe"></div>
<div style="left:736.9px;top:126.9px;width:56.1px;height:13px;background:#d1bce8"></div>
<div class="t" style="left:738.1px;top:125px;font-weight:bold;font-size:9.8px;color:#111">Light</div>
<div style="left:721px;top:142.6px;width:74px;height:17.2px;background:#909090"></div>
<div style="left:725.4px;top:147.2px;width:8.8px;height:8.6px;background:#696969;border:1px solid #4c4c4c;box-sizing:border-box"></div>
<div style="left:721px;top:160.6px;width:74px;height:17.2px;background:#909090"></div>
<div style="left:722.1px;top:161.9px;width:71.8px;height:15px;background:#0a0606"></div>
<div style="left:723.1px;top:162.9px;width:13px;height:13px;background:#c2bebe"></div>
<div style="left:736.9px;top:162.9px;width:56.1px;height:13px;background:#d1bce8"></div>
<div style="left:721px;top:178.6px;width:74px;height:17.2px;background:#909090"></div>
<div style="left:722.1px;top:179.9px;width:71.8px;height:15px;background:#0a0606"></div>
<div style="left:723.1px;top:180.9px;width:13px;height:13px;background:#c2bebe"></div>
<div style="left:736.9px;top:180.9px;width:56.1px;height:13px;background:#d1bce8"></div>
<div style="left:721px;top:196.6px;width:74px;height:17.2px;background:#b9b5b5"></div>
<div style="left:722.1px;top:197.9px;width:71.8px;height:15px;background:#0a0606"></div>
<div style="left:723.1px;top:198.9px;width:13px;height:13px;background:#1c212b"></div>
<div style="left:736.9px;top:198.9px;width:56.1px;height:13px;background:#d1bce8"></div>
<div class="t" style="left:738.1px;top:197px;font-weight:bold;font-size:9.8px;color:#111">Variation</div>
<div style="left:721px;top:214.6px;width:74px;height:17.2px;background:#909090"></div>
<div style="left:725.4px;top:219.2px;width:8.8px;height:8.6px;background:#696969;border:1px solid #4c4c4c;box-sizing:border-box"></div>
<div style="left:721px;top:232.6px;width:74px;height:17.2px;background:#909090"></div>
<div style="left:725.4px;top:237.2px;width:8.8px;height:8.6px;background:#696969;border:1px solid #4c4c4c;box-sizing:border-box"></div>
<div style="left:721px;top:250.6px;width:74px;height:17.2px;background:#909090"></div>
<div style="left:725.4px;top:255.2px;width:8.8px;height:8.6px;background:#696969;border:1px solid #4c4c4c;box-sizing:border-box"></div>
<div style="left:721px;top:270.2px;width:74px;height:33.8px;background:#909090"></div>
<div style="left:721px;top:308px;width:74px;height:16.7px;background:#909090"></div>
<div style="left:725.2px;top:312.2px;width:8.8px;height:8.6px;background:#696969;border:1px solid #4c4c4c;box-sizing:border-box"></div>
<div class="t c" style="left:739px;width:20px;top:308px;font-size:9.8px">4</div>
<div class="t c" style="left:773.9px;width:20px;top:308px;font-size:9.8px">16</div>
<div style="left:721px;top:327px;width:74px;height:53px;background:#909090"></div>
<div class="t c" style="left:735.3px;width:12.4px;top:346px;font-weight:bold;font-size:9.2px">A</div>
<div class="t c" style="left:768.3px;width:12.4px;top:363px;font-weight:bold;font-size:9.2px">B</div>
<div class="t" style="left:760.5px;top:328px;font-weight:bold;font-size:9.5px">Sends</div>
<div style="left:721px;top:381.8px;width:74px;height:155.7px;background:#909090"></div>
<div style="left:724px;top:386px;width:35px;height:12.7px;background:#d6d6d6;border:1px solid #333;border-radius:6.4px;box-sizing:border-box"></div>
<div class="t c" style="left:724px;width:35px;top:384px;font-size:10px;color:#1a1a1a">-12.60</div>
<div style="left:724px;top:403.2px;width:35px;height:12.5px;background:#c9c9c9;border:1px solid #333;box-sizing:border-box"></div>
<div class="t c" style="left:724px;width:35px;top:401px;font-size:10px;color:#1a1a1a">-8.3</div>
<div style="left:730.2px;top:477.1px;width:22.6px;height:22.7px;background:#ffc80a;border:1px solid #4c4c4c;box-sizing:border-box"></div>
<div class="t c" style="left:730.2px;width:22.6px;top:479px;font-weight:bold;font-size:11.8px">6</div>
<div style="left:730.2px;top:504.2px;width:22.6px;height:12.6px;background:#9c9c9c;border:1px solid #2a2a2a;box-sizing:border-box"></div>
<div class="t c" style="left:730.2px;width:22.6px;top:502px;font-size:10px">S</div>
<div style="left:730.2px;top:521.1px;width:22.6px;height:12.6px;background:#9c9c9c;border:1px solid #2a2a2a;box-sizing:border-box"></div>
<div style="left:767px;top:386px;width:5px;height:148px;background:#1c212b"></div>
<div style="left:767px;top:488.8px;width:5px;height:45.2px;background:linear-gradient(#5cf56c,#1cf062)"></div>
<div style="left:767px;top:481.6px;width:5px;height:1.3px;background:#7cf060"></div>
<div style="left:773px;top:386px;width:5px;height:148px;background:#1c212b"></div>
<div style="left:773px;top:480.8px;width:5px;height:53.2px;background:linear-gradient(#5cf56c,#1cf062)"></div>
<div style="left:773px;top:475.7px;width:5px;height:1.3px;background:#7cf060"></div>
<div style="left:767px;top:408px;width:11px;height:0.9px;background:#8c8c8c"></div>
<div style="left:780px;top:386.1px;width:4px;height:1px;background:#555"></div>
<div style="left:780px;top:407.8px;width:4px;height:1px;background:#555"></div>
<div style="left:780px;top:429.7px;width:4px;height:1px;background:#555"></div>
<div style="left:780px;top:451.8px;width:4px;height:1px;background:#555"></div>
<div style="left:780px;top:473.5px;width:4px;height:1px;background:#555"></div>
<div style="left:780px;top:488.8px;width:4px;height:1px;background:#555"></div>
<div style="left:780px;top:504.5px;width:4px;height:1px;background:#555"></div>
<div style="left:780px;top:517.9px;width:4px;height:1px;background:#555"></div>
<div style="left:780px;top:497.05px;width:4px;height:0.9px;background:#666"></div>
<div style="left:780px;top:511.85px;width:4px;height:0.9px;background:#666"></div>
<div style="left:780px;top:522.95px;width:4px;height:0.9px;background:#666"></div>
<div style="left:780px;top:527.95px;width:4px;height:0.9px;background:#666"></div>
<div style="left:780px;top:530.95px;width:4px;height:0.9px;background:#666"></div>
<div style="left:797px;top:104px;width:93px;height:17px;background:#909090"></div>
<div class="t" style="left:800.6px;top:103px;font-weight:bold;font-style:italic;font-size:10.5px">Pad</div>
<div style="left:797px;top:124.6px;width:93px;height:143.4px;background:#6c6c6c"></div>
<div style="left:797px;top:124.6px;width:93px;height:17.2px;background:#909090"></div>
<div style="left:801.4px;top:129.2px;width:8.8px;height:8.6px;background:#696969;border:1px solid #4c4c4c;box-sizing:border-box"></div>
<div style="left:797px;top:142.6px;width:93px;height:17.2px;background:#909090"></div>
<div style="left:801.4px;top:147.2px;width:8.8px;height:8.6px;background:#696969;border:1px solid #4c4c4c;box-sizing:border-box"></div>
<div style="left:797px;top:160.6px;width:93px;height:17.2px;background:#909090"></div>
<div style="left:801.4px;top:165.2px;width:8.8px;height:8.6px;background:#696969;border:1px solid #4c4c4c;box-sizing:border-box"></div>
<div style="left:797px;top:178.6px;width:93px;height:17.2px;background:#909090"></div>
<div style="left:798.1px;top:179.9px;width:90.8px;height:15px;background:#0a0606"></div>
<div style="left:799.1px;top:180.9px;width:13px;height:13px;background:#c2bebe"></div>
<div style="left:812.9px;top:180.9px;width:75.1px;height:13px;background:#cfeff7"></div>
<div class="t" style="left:814.1px;top:179px;font-weight:bold;font-size:9.8px;color:#111">Buildup</div>
<div style="left:797px;top:196.6px;width:93px;height:17.2px;background:#b9b5b5"></div>
<div style="left:798.1px;top:197.9px;width:90.8px;height:15px;background:#0a0606"></div>
<div style="left:799.1px;top:198.9px;width:13px;height:13px;background:#1c212b"></div>
<div style="left:812.9px;top:198.9px;width:75.1px;height:13px;background:#d8fde4"></div>
<div style="left:797px;top:214.6px;width:93px;height:17.2px;background:#909090"></div>
<div style="left:801.4px;top:219.2px;width:8.8px;height:8.6px;background:#696969;border:1px solid #4c4c4c;box-sizing:border-box"></div>
<div style="left:797px;top:232.6px;width:93px;height:17.2px;background:#909090"></div>
<div style="left:798.1px;top:233.9px;width:90.8px;height:15px;background:#0a0606"></div>
<div style="left:799.1px;top:234.9px;width:13px;height:13px;background:#c2bebe"></div>
<div style="left:812.9px;top:234.9px;width:75.1px;height:13px;background:#d8fde4"></div>
<div style="left:797px;top:250.6px;width:93px;height:17.2px;background:#909090"></div>
<div style="left:798.1px;top:251.9px;width:90.8px;height:15px;background:#0a0606"></div>
<div style="left:799.1px;top:252.9px;width:13px;height:13px;background:#c2bebe"></div>
<div style="left:812.9px;top:252.9px;width:75.1px;height:13px;background:#d8fde4"></div>
<div style="left:797px;top:270.2px;width:93px;height:33.8px;background:#909090"></div>
<div style="left:797px;top:308px;width:93px;height:16.7px;background:#909090"></div>
<div style="left:801.2px;top:312.2px;width:8.8px;height:8.6px;background:#696969;border:1px solid #4c4c4c;box-sizing:border-box"></div>
<div class="t c" style="left:820px;width:20px;top:308px;font-size:9.8px">4</div>
<div class="t c" style="left:863.5px;width:20px;top:308px;font-size:9.8px">16</div>
<div style="left:797px;top:327px;width:93px;height:53px;background:#909090"></div>
<div class="t c" style="left:819.3px;width:12.4px;top:346px;font-weight:bold;font-size:9.2px">A</div>
<div class="t c" style="left:852.3px;width:12.4px;top:363px;font-weight:bold;font-size:9.2px">B</div>
<div class="t" style="left:844.5px;top:328px;font-weight:bold;font-size:9.5px">Sends</div>
<div style="left:797px;top:381.8px;width:93px;height:155.7px;background:#909090"></div>
<div style="left:808px;top:386px;width:35px;height:12.7px;background:#d6d6d6;border:1px solid #333;border-radius:6.4px;box-sizing:border-box"></div>
<div class="t c" style="left:808px;width:35px;top:384px;font-size:10px;color:#1a1a1a">-16.32</div>
<div style="left:808px;top:403.2px;width:35px;height:12.5px;background:#c9c9c9;border:1px solid #333;box-sizing:border-box"></div>
<div class="t c" style="left:808px;width:35px;top:401px;font-size:10px;color:#1a1a1a">-inf</div>
<div style="left:807.8px;top:402.9px;width:5px;height:5px;background:#ff0505;border-radius:1.2px"></div>
<div style="left:814.2px;top:477.1px;width:22.6px;height:22.7px;background:#ffc80a;border:1px solid #4c4c4c;box-sizing:border-box"></div>
<div class="t c" style="left:814.2px;width:22.6px;top:479px;font-weight:bold;font-size:11.8px">7</div>
<div style="left:814.2px;top:504.2px;width:22.6px;height:12.6px;background:#9c9c9c;border:1px solid #2a2a2a;box-sizing:border-box"></div>
<div class="t c" style="left:814.2px;width:22.6px;top:502px;font-size:10px">S</div>
<div style="left:814.2px;top:521.1px;width:22.6px;height:12.6px;background:#9c9c9c;border:1px solid #2a2a2a;box-sizing:border-box"></div>
<div style="left:851px;top:386px;width:5px;height:148px;background:#1c212b"></div>
<div style="left:851px;top:468.8px;width:5px;height:1.3px;background:#7cf060"></div>
<div style="left:857px;top:386px;width:5px;height:148px;background:#1c212b"></div>
<div style="left:857px;top:473.9px;width:5px;height:1.3px;background:#7cf060"></div>
<div style="left:851px;top:408px;width:11px;height:0.9px;background:#8c8c8c"></div>
<div style="left:864px;top:386.1px;width:4px;height:1px;background:#555"></div>
<div style="left:864px;top:407.8px;width:4px;height:1px;background:#555"></div>
<div style="left:864px;top:429.7px;width:4px;height:1px;background:#555"></div>
<div style="left:864px;top:451.8px;width:4px;height:1px;background:#555"></div>
<div style="left:864px;top:473.5px;width:4px;height:1px;background:#555"></div>
<div style="left:864px;top:488.8px;width:4px;height:1px;background:#555"></div>
<div style="left:864px;top:504.5px;width:4px;height:1px;background:#555"></div>
<div style="left:864px;top:517.9px;width:4px;height:1px;background:#555"></div>
<div style="left:864px;top:497.05px;width:4px;height:0.9px;background:#666"></div>
<div style="left:864px;top:511.85px;width:4px;height:0.9px;background:#666"></div>
<div style="left:864px;top:522.95px;width:4px;height:0.9px;background:#666"></div>
<div style="left:864px;top:527.95px;width:4px;height:0.9px;background:#666"></div>
<div style="left:864px;top:530.95px;width:4px;height:0.9px;background:#666"></div>
<div class="t r" style="left:685px;width:200px;top:383px;font-size:10px;color:#111">6</div>
<div class="t r" style="left:685px;width:200px;top:400px;font-size:10px;color:#111">0</div>
<div class="t r" style="left:685px;width:200px;top:422px;font-size:10px;color:#111">6</div>
<div class="t r" style="left:685px;width:200px;top:444px;font-size:10px;color:#111">12</div>
<div class="t r" style="left:685px;width:200px;top:466px;font-size:10px;color:#111">18</div>
<div class="t r" style="left:685px;width:200px;top:481px;font-size:10px;color:#111">24</div>
<div class="t r" style="left:685px;width:200px;top:497px;font-size:10px;color:#111">36</div>
<div class="t r" style="left:685px;width:200px;top:510px;font-size:10px;color:#111">48</div>
<div style="left:892px;top:104px;width:93px;height:17px;background:#909090"></div>
<div class="t" style="left:895.6px;top:103px;font-weight:bold;font-style:italic;font-size:10.5px">Arp</div>
<div style="left:892px;top:124.6px;width:93px;height:143.4px;background:#6c6c6c"></div>
<div style="left:892px;top:124.6px;width:93px;height:17.2px;background:#909090"></div>
<div style="left:896.4px;top:129.2px;width:8.8px;height:8.6px;background:#696969;border:1px solid #4c4c4c;box-sizing:border-box"></div>
<div style="left:892px;top:142.6px;width:93px;height:17.2px;background:#909090"></div>
<div style="left:896.4px;top:147.2px;width:8.8px;height:8.6px;background:#696969;border:1px solid #4c4c4c;box-sizing:border-box"></div>
<div style="left:892px;top:160.6px;width:93px;height:17.2px;background:#909090"></div>
<div style="left:893.1px;top:161.9px;width:90.8px;height:15px;background:#0a0606"></div>
<div style="left:894.1px;top:162.9px;width:13px;height:13px;background:#c2bebe"></div>
<div style="left:907.9px;top:162.9px;width:75.1px;height:13px;background:#dc6ee6"></div>
<div style="left:892px;top:178.6px;width:93px;height:17.2px;background:#909090"></div>
<div style="left:893.1px;top:179.9px;width:90.8px;height:15px;background:#0a0606"></div>
<div style="left:894.1px;top:180.9px;width:13px;height:13px;background:#c2bebe"></div>
<div style="left:907.9px;top:180.9px;width:75.1px;height:13px;background:#ff3cd4"></div>
<div style="left:892px;top:196.6px;width:93px;height:17.2px;background:#b9b5b5"></div>
<div style="left:893.1px;top:197.9px;width:90.8px;height:15px;background:#0a0606"></div>
<div style="left:894.1px;top:198.9px;width:13px;height:13px;background:#1c212b"></div>
<div style="left:907.9px;top:198.9px;width:75.1px;height:13px;background:#ff3cd4"></div>
<div style="left:892px;top:214.6px;width:93px;height:17.2px;background:#909090"></div>
<div style="left:896.4px;top:219.2px;width:8.8px;height:8.6px;background:#696969;border:1px solid #4c4c4c;box-sizing:border-box"></div>
<div style="left:892px;top:232.6px;width:93px;height:17.2px;background:#909090"></div>
<div style="left:896.4px;top:237.2px;width:8.8px;height:8.6px;background:#696969;border:1px solid #4c4c4c;box-sizing:border-box"></div>
<div style="left:892px;top:250.6px;width:93px;height:17.2px;background:#909090"></div>
<div style="left:893.1px;top:251.9px;width:90.8px;height:15px;background:#0a0606"></div>
<div style="left:894.1px;top:252.9px;width:13px;height:13px;background:#c2bebe"></div>
<div style="left:907.9px;top:252.9px;width:75.1px;height:13px;background:#ff96aa"></div>
<div class="t" style="left:909.1px;top:251px;font-weight:bold;font-size:9.8px;color:#111">Outro</div>
<div style="left:892px;top:270.2px;width:93px;height:33.8px;background:#909090"></div>
<div style="left:892px;top:308px;width:93px;height:16.7px;background:#909090"></div>
<div style="left:896.2px;top:312.2px;width:8.8px;height:8.6px;background:#696969;border:1px solid #4c4c4c;box-sizing:border-box"></div>
<div class="t c" style="left:915px;width:20px;top:308px;font-size:9.8px">13</div>
<div class="t c" style="left:958.5px;width:20px;top:308px;font-size:9.8px">4</div>
<div style="left:892px;top:327px;width:93px;height:53px;background:#909090"></div>
<div class="t c" style="left:914.3px;width:12.4px;top:346px;font-weight:bold;font-size:9.2px">A</div>
<div class="t c" style="left:947.3px;width:12.4px;top:363px;font-weight:bold;font-size:9.2px">B</div>
<div class="t" style="left:939.5px;top:328px;font-weight:bold;font-size:9.5px">Sends</div>
<div style="left:892px;top:381.8px;width:93px;height:155.7px;background:#909090"></div>
<div style="left:903px;top:386px;width:35px;height:12.7px;background:#d6d6d6;border:1px solid #333;border-radius:6.4px;box-sizing:border-box"></div>
<div class="t c" style="left:903px;width:35px;top:384px;font-size:10px;color:#1a1a1a">-8.02</div>
<div style="left:903px;top:403.2px;width:35px;height:12.5px;background:#c9c9c9;border:1px solid #333;box-sizing:border-box"></div>
<div class="t c" style="left:903px;width:35px;top:401px;font-size:10px;color:#1a1a1a">0</div>
<div style="left:909.2px;top:477.1px;width:22.6px;height:22.7px;background:#ffc80a;border:1px solid #4c4c4c;box-sizing:border-box"></div>
<div class="t c" style="left:909.2px;width:22.6px;top:479px;font-weight:bold;font-size:11.8px">8</div>
<div style="left:909.2px;top:504.2px;width:22.6px;height:12.6px;background:#9c9c9c;border:1px solid #2a2a2a;box-sizing:border-box"></div>
<div class="t c" style="left:909.2px;width:22.6px;top:502px;font-size:10px">S</div>
<div style="left:909.2px;top:521.1px;width:22.6px;height:12.6px;background:#9c9c9c;border:1px solid #2a2a2a;box-sizing:border-box"></div>
<div style="left:946px;top:386px;width:5px;height:148px;background:#1c212b"></div>
<div style="left:946px;top:456.1px;width:5px;height:77.9px;background:linear-gradient(#5cf56c,#1cf062)"></div>
<div style="left:946px;top:443px;width:5px;height:1.3px;background:#7cf060"></div>
<div style="left:952px;top:386px;width:5px;height:148px;background:#1c212b"></div>
<div style="left:952px;top:456.1px;width:5px;height:77.9px;background:linear-gradient(#5cf56c,#1cf062)"></div>
<div style="left:952px;top:443px;width:5px;height:1.3px;background:#7cf060"></div>
<div style="left:946px;top:408px;width:11px;height:0.9px;background:#8c8c8c"></div>
<div style="left:959px;top:386.1px;width:4px;height:1px;background:#555"></div>
<div style="left:959px;top:407.8px;width:4px;height:1px;background:#555"></div>
<div style="left:959px;top:429.7px;width:4px;height:1px;background:#555"></div>
<div style="left:959px;top:451.8px;width:4px;height:1px;background:#555"></div>
<div style="left:959px;top:473.5px;width:4px;height:1px;background:#555"></div>
<div style="left:959px;top:488.8px;width:4px;height:1px;background:#555"></div>
<div style="left:959px;top:504.5px;width:4px;height:1px;background:#555"></div>
<div style="left:959px;top:517.9px;width:4px;height:1px;background:#555"></div>
<div style="left:959px;top:497.05px;width:4px;height:0.9px;background:#666"></div>
<div style="left:959px;top:511.85px;width:4px;height:0.9px;background:#666"></div>
<div style="left:959px;top:522.95px;width:4px;height:0.9px;background:#666"></div>
<div style="left:959px;top:527.95px;width:4px;height:0.9px;background:#666"></div>
<div style="left:959px;top:530.95px;width:4px;height:0.9px;background:#666"></div>
<div class="t r" style="left:780px;width:200px;top:383px;font-size:10px;color:#111">6</div>
<div class="t r" style="left:780px;width:200px;top:400px;font-size:10px;color:#111">0</div>
<div class="t r" style="left:780px;width:200px;top:422px;font-size:10px;color:#111">6</div>
<div class="t r" style="left:780px;width:200px;top:444px;font-size:10px;color:#111">12</div>
<div class="t r" style="left:780px;width:200px;top:466px;font-size:10px;color:#111">18</div>
<div class="t r" style="left:780px;width:200px;top:481px;font-size:10px;color:#111">24</div>
<div class="t r" style="left:780px;width:200px;top:497px;font-size:10px;color:#111">36</div>
<div class="t r" style="left:780px;width:200px;top:510px;font-size:10px;color:#111">48</div>
<div style="left:987px;top:104px;width:74px;height:17px;background:#909090"></div>
<div class="t" style="left:990.6px;top:103px;font-weight:bold;font-style:italic;font-size:10.5px">FX</div>
<div style="left:987px;top:124.6px;width:74px;height:143.4px;background:#6c6c6c"></div>
<div style="left:987px;top:124.6px;width:74px;height:17.2px;background:#909090"></div>
<div style="left:991.4px;top:129.2px;width:8.8px;height:8.6px;background:#696969;border:1px solid #4c4c4c;box-sizing:border-box"></div>
<div style="left:987px;top:142.6px;width:74px;height:17.2px;background:#909090"></div>
<div style="left:991.4px;top:147.2px;width:8.8px;height:8.6px;background:#696969;border:1px solid #4c4c4c;box-sizing:border-box"></div>
<div style="left:987px;top:160.6px;width:74px;height:17.2px;background:#909090"></div>
<div style="left:991.4px;top:165.2px;width:8.8px;height:8.6px;background:#696969;border:1px solid #4c4c4c;box-sizing:border-box"></div>
<div style="left:987px;top:178.6px;width:74px;height:17.2px;background:#909090"></div>
<div style="left:988.1px;top:179.9px;width:71.8px;height:15px;background:#0a0606"></div>
<div style="left:989.1px;top:180.9px;width:13px;height:13px;background:#c2bebe"></div>
<div style="left:1002.9px;top:180.9px;width:56.1px;height:13px;background:#e8f30a"></div>
<div style="left:987px;top:196.6px;width:74px;height:17.2px;background:#b9b5b5"></div>
<div style="left:988.1px;top:197.9px;width:71.8px;height:15px;background:#0a0606"></div>
<div style="left:989.1px;top:198.9px;width:13px;height:13px;background:#1c212b"></div>
<div style="left:1002.9px;top:198.9px;width:56.1px;height:13px;background:#e8f30a"></div>
<div style="left:987px;top:214.6px;width:74px;height:17.2px;background:#909090"></div>
<div style="left:991.4px;top:219.2px;width:8.8px;height:8.6px;background:#696969;border:1px solid #4c4c4c;box-sizing:border-box"></div>
<div style="left:987px;top:232.6px;width:74px;height:17.2px;background:#909090"></div>
<div style="left:991.4px;top:237.2px;width:8.8px;height:8.6px;background:#696969;border:1px solid #4c4c4c;box-sizing:border-box"></div>
<div style="left:987px;top:250.6px;width:74px;height:17.2px;background:#909090"></div>
<div style="left:988.1px;top:251.9px;width:71.8px;height:15px;background:#0a0606"></div>
<div style="left:989.1px;top:252.9px;width:13px;height:13px;background:#c2bebe"></div>
<div style="left:1002.9px;top:252.9px;width:56.1px;height:13px;background:#e0c000"></div>
<div class="t" style="left:1004.1px;top:251px;font-weight:bold;font-size:9.8px;color:#111">Variation</div>
<div style="left:987px;top:270.2px;width:74px;height:33.8px;background:#909090"></div>
<div style="left:987px;top:308px;width:74px;height:16.7px;background:#909090"></div>
<div style="left:991.2px;top:312.2px;width:8.8px;height:8.6px;background:#696969;border:1px solid #4c4c4c;box-sizing:border-box"></div>
<div class="t c" style="left:1005px;width:20px;top:308px;font-size:9.8px">13</div>
<div class="t c" style="left:1039.9px;width:20px;top:308px;font-size:9.8px">4</div>
<div style="left:987px;top:327px;width:74px;height:53px;background:#909090"></div>
<div class="t c" style="left:1001.3px;width:12.4px;top:346px;font-weight:bold;font-size:9.2px">A</div>
<div class="t c" style="left:1034.3px;width:12.4px;top:363px;font-weight:bold;font-size:9.2px">B</div>
<div class="t" style="left:1026.5px;top:328px;font-weight:bold;font-size:9.5px">Sends</div>
<div style="left:987px;top:381.8px;width:74px;height:155.7px;background:#909090"></div>
<div style="left:990px;top:386px;width:35px;height:12.7px;background:#d6d6d6;border:1px solid #333;border-radius:6.4px;box-sizing:border-box"></div>
<div class="t c" style="left:990px;width:35px;top:384px;font-size:10px;color:#1a1a1a">-12.43</div>
<div style="left:990px;top:403.2px;width:35px;height:12.5px;background:#c9c9c9;border:1px solid #333;box-sizing:border-box"></div>
<div class="t c" style="left:990px;width:35px;top:401px;font-size:10px;color:#1a1a1a">0</div>
<div style="left:996.2px;top:477.1px;width:22.6px;height:22.7px;background:#ffc80a;border:1px solid #4c4c4c;box-sizing:border-box"></div>
<div class="t c" style="left:996.2px;width:22.6px;top:479px;font-weight:bold;font-size:11.8px">9</div>
<div style="left:996.2px;top:504.2px;width:22.6px;height:12.6px;background:#9c9c9c;border:1px solid #2a2a2a;box-sizing:border-box"></div>
<div class="t c" style="left:996.2px;width:22.6px;top:502px;font-size:10px">S</div>
<div style="left:996.2px;top:521.1px;width:22.6px;height:12.6px;background:#9c9c9c;border:1px solid #2a2a2a;box-sizing:border-box"></div>
<div style="left:1033px;top:386px;width:5px;height:148px;background:#1c212b"></div>
<div style="left:1033px;top:484.9px;width:5px;height:49.1px;background:linear-gradient(#5cf56c,#1cf062)"></div>
<div style="left:1033px;top:453.9px;width:5px;height:1.3px;background:#7cf060"></div>
<div style="left:1039px;top:386px;width:5px;height:148px;background:#1c212b"></div>
<div style="left:1039px;top:484.9px;width:5px;height:49.1px;background:linear-gradient(#5cf56c,#1cf062)"></div>
<div style="left:1039px;top:453.9px;width:5px;height:1.3px;background:#7cf060"></div>
<div style="left:1033px;top:408px;width:11px;height:0.9px;background:#8c8c8c"></div>
<div style="left:1046px;top:386.1px;width:4px;height:1px;background:#555"></div>
<div style="left:1046px;top:407.8px;width:4px;height:1px;background:#555"></div>
<div style="left:1046px;top:429.7px;width:4px;height:1px;background:#555"></div>
<div style="left:1046px;top:451.8px;width:4px;height:1px;background:#555"></div>
<div style="left:1046px;top:473.5px;width:4px;height:1px;background:#555"></div>
<div style="left:1046px;top:488.8px;width:4px;height:1px;background:#555"></div>
<div style="left:1046px;top:504.5px;width:4px;height:1px;background:#555"></div>
<div style="left:1046px;top:517.9px;width:4px;height:1px;background:#555"></div>
<div style="left:1046px;top:497.05px;width:4px;height:0.9px;background:#666"></div>
<div style="left:1046px;top:511.85px;width:4px;height:0.9px;background:#666"></div>
<div style="left:1046px;top:522.95px;width:4px;height:0.9px;background:#666"></div>
<div style="left:1046px;top:527.95px;width:4px;height:0.9px;background:#666"></div>
<div style="left:1046px;top:530.95px;width:4px;height:0.9px;background:#666"></div>
<div style="left:1064.7px;top:104px;width:93.3px;height:17px;background:#909090"></div>
<div class="t" style="left:1071.5px;top:103px;font-weight:bold;font-style:italic;font-size:10.7px">Master</div>
<div style="left:1064.7px;top:124.6px;width:93.3px;height:143.4px;background:#6c6c6c"></div>
<div style="left:1064.7px;top:124.6px;width:93.3px;height:17.2px;background:#909090"></div>
<div class="t c" style="left:1112.1px;width:14px;top:125px;font-weight:bold;font-style:italic;font-size:10px">1</div>
<div style="left:1064.7px;top:142.6px;width:93.3px;height:17.2px;background:#909090"></div>
<div class="t c" style="left:1112.1px;width:14px;top:143px;font-weight:bold;font-style:italic;font-size:10px">2</div>
<div style="left:1064.7px;top:160.6px;width:93.3px;height:17.2px;background:#909090"></div>
<div class="t c" style="left:1112.1px;width:14px;top:161px;font-weight:bold;font-style:italic;font-size:10px">3</div>
<div style="left:1064.7px;top:178.6px;width:93.3px;height:17.2px;background:#909090"></div>
<div class="t c" style="left:1112.1px;width:14px;top:179px;font-weight:bold;font-style:italic;font-size:10px">4</div>
<div style="left:1064.7px;top:196.6px;width:93.3px;height:17.2px;background:#80fffc"></div>
<div class="t c" style="left:1112.1px;width:14px;top:197px;font-weight:bold;font-style:italic;font-size:10px">5</div>
<div style="left:1064.7px;top:214.6px;width:93.3px;height:17.2px;background:#909090"></div>
<div class="t c" style="left:1112.1px;width:14px;top:215px;font-weight:bold;font-style:italic;font-size:10px">6</div>
<div style="left:1064.7px;top:232.6px;width:93.3px;height:17.2px;background:#909090"></div>
<div class="t c" style="left:1112.1px;width:14px;top:233px;font-weight:bold;font-style:italic;font-size:10px">7</div>
<div style="left:1064.7px;top:250.6px;width:93.3px;height:17.2px;background:#909090"></div>
<div class="t c" style="left:1112.1px;width:14px;top:251px;font-weight:bold;font-style:italic;font-size:10px">8</div>
<div style="left:1064.7px;top:270.2px;width:93.3px;height:33.8px;background:#909090"></div>
<div style="left:1064.7px;top:308px;width:93.3px;height:16.7px;background:#909090"></div>
<div style="left:1069.1px;top:312.2px;width:8.8px;height:8.6px;background:#696969;border:1px solid #4c4c4c;box-sizing:border-box"></div>
<div style="left:1136.4px;top:310.3px;width:19.6px;height:12.3px;background:#f57a14;border:1px solid #3a2a1a;box-sizing:border-box"></div>
<div style="left:1064.7px;top:327px;width:93.3px;height:53px;background:#909090"></div>
<div style="left:1065.3px;top:344px;width:15.7px;height:0.8px;background:#9c9c9c"></div>
<div style="left:1065.3px;top:361px;width:48.7px;height:0.8px;background:#9c9c9c"></div>
<div style="left:1081.1px;top:338.2px;width:25.8px;height:12.4px;background:#ffc80a;border:1px solid #4a4a3a;box-sizing:border-box"></div>
<div class="t c" style="left:1081.1px;width:25.8px;top:336px;font-size:9.5px">Post</div>
<div style="left:1114.2px;top:355.4px;width:25.8px;height:12.4px;background:#ffc80a;border:1px solid #4a4a3a;box-sizing:border-box"></div>
<div class="t c" style="left:1114.2px;width:25.8px;top:353px;font-size:9.5px">Post</div>
<div class="t" style="left:1113.4px;top:328px;font-weight:bold;font-size:9.5px">Sends</div>
<div style="left:1064.7px;top:381.8px;width:93.3px;height:155.7px;background:#909090"></div>
<div style="left:1076px;top:386px;width:35px;height:12.7px;background:#d6d6d6;border:1px solid #333;border-radius:6.4px;box-sizing:border-box"></div>
<div class="t c" style="left:1076px;width:35px;top:384px;font-size:10px;color:#1a1a1a">-1.80</div>
<div style="left:1076px;top:403.2px;width:35px;height:12.5px;background:#c9c9c9;border:1px solid #333;box-sizing:border-box"></div>
<div class="t c" style="left:1076px;width:35px;top:401px;font-size:10px;color:#1a1a1a">-1.5</div>
<div style="left:1082.2px;top:487.2px;width:23.5px;height:12.4px;background:#9c9c9c;border:1px solid #444;box-sizing:border-box"></div>
<div class="t c" style="left:1082.2px;width:23.5px;top:485px;font-size:9.5px;color:#5a5a5a">Solo</div>
<div style="left:1119px;top:386px;width:5px;height:148px;background:#1c212b"></div>
<div style="left:1119px;top:424.7px;width:5px;height:109.3px;background:linear-gradient(#8cf060,#1cf062)"></div>
<div style="left:1119px;top:416.7px;width:5px;height:1.3px;background:#a4e83c"></div>
<div style="left:1125px;top:386px;width:5px;height:148px;background:#1c212b"></div>
<div style="left:1125px;top:424.7px;width:5px;height:109.3px;background:linear-gradient(#8cf060,#1cf062)"></div>
<div style="left:1125px;top:420.1px;width:5px;height:1.3px;background:#a4e83c"></div>
<div style="left:1119px;top:408px;width:11px;height:0.9px;background:#8c8c8c"></div>
<div style="left:1132px;top:386.1px;width:4px;height:1px;background:#555"></div>
<div style="left:1132px;top:407.8px;width:4px;height:1px;background:#555"></div>
<div style="left:1132px;top:429.7px;width:4px;height:1px;background:#555"></div>
<div style="left:1132px;top:451.8px;width:4px;height:1px;background:#555"></div>
<div style="left:1132px;top:473.5px;width:4px;height:1px;background:#555"></div>
<div style="left:1132px;top:488.8px;width:4px;height:1px;background:#555"></div>
<div style="left:1132px;top:504.5px;width:4px;height:1px;background:#555"></div>
<div style="left:1132px;top:517.9px;width:4px;height:1px;background:#555"></div>
<div style="left:1132px;top:497.05px;width:4px;height:0.9px;background:#666"></div>
<div style="left:1132px;top:511.85px;width:4px;height:0.9px;background:#666"></div>
<div style="left:1132px;top:522.95px;width:4px;height:0.9px;background:#666"></div>
<div style="left:1132px;top:527.95px;width:4px;height:0.9px;background:#666"></div>
<div style="left:1132px;top:530.95px;width:4px;height:0.9px;background:#666"></div>
<div class="t r" style="left:953px;width:200px;top:383px;font-size:10px;color:#111">6</div>
<div class="t r" style="left:953px;width:200px;top:400px;font-size:10px;color:#111">0</div>
<div class="t r" style="left:953px;width:200px;top:422px;font-size:10px;color:#111">6</div>
<div class="t r" style="left:953px;width:200px;top:444px;font-size:10px;color:#111">12</div>
<div class="t r" style="left:953px;width:200px;top:466px;font-size:10px;color:#111">18</div>
<div class="t r" style="left:953px;width:200px;top:481px;font-size:10px;color:#111">24</div>
<div class="t r" style="left:953px;width:200px;top:497px;font-size:10px;color:#111">36</div>
<div class="t r" style="left:953px;width:200px;top:510px;font-size:10px;color:#111">48</div>
<div style="left:1175px;top:447px;width:12.8px;height:12.8px;border-radius:50%;background:#1c212b;"></div>
<div style="left:1162.1px;top:466px;width:12.6px;height:13px;background:#ffc80a;border-radius:6.5px 0 0 6.5px"></div>
<div style="left:1174.7px;top:466px;width:13.1px;height:13px;background:#1c212b;border-radius:0 6.5px 6.5px 0"></div>
<div style="left:1175px;top:485.1px;width:12.8px;height:12.8px;border-radius:50%;background:#ffc80a;"></div>
<div style="left:1175px;top:504.1px;width:12.8px;height:12.8px;border-radius:50%;background:#1c212b;"></div>
<div style="left:1175px;top:523.1px;width:12.8px;height:12.8px;border-radius:50%;background:#1c212b;"></div>
<div class="t c" style="left:1174px;width:15px;top:445px;font-size:6.5px;color:#848484;-webkit-text-stroke:0">I·O</div>
<div class="t c" style="left:1162.5px;width:13px;top:463px;font-size:7.5px;color:#3a2a00;-webkit-text-stroke:0">S</div>
<div class="t c" style="left:1175px;width:13px;top:463px;font-size:7.5px;color:#848484;-webkit-text-stroke:0">R</div>
<div class="t c" style="left:1175px;width:13px;top:482px;font-size:7.5px;color:#3a2a00;-webkit-text-stroke:0">M</div>
<div class="t c" style="left:1175px;width:13px;top:501px;font-size:7.5px;color:#848484;-webkit-text-stroke:0">D</div>
<div style="left:47.2px;top:554px;width:1143.6px;height:200px;background:#5b5b5b;border-radius:7px"></div>
<div style="left:822.2px;top:745px;width:208px;height:39px;background:#5b5b5b;border-radius:0 0 5px 5px"></div>
<div style="left:816.2px;top:754px;width:6px;height:6px;background:radial-gradient(circle at 0 100%,transparent 5.6px,#5b5b5b 6.2px)"></div>
<div style="left:1030.2px;top:754px;width:6px;height:6px;background:radial-gradient(circle at 100% 100%,transparent 5.6px,#5b5b5b 6.2px)"></div>
<div style="left:53.8px;top:561px;width:68.4px;height:165px;background:#929292"></div>
<div style="left:53.8px;top:561px;width:68.4px;height:17.2px;background:#66ffe8"></div>
<div class="t" style="left:74.6px;top:559px;font-weight:bold;font-style:italic;font-size:10.6px">Clip</div>
<div style="left:58px;top:580.3px;width:60px;height:12.5px;background:#c4c4c4;border:1px solid #333;box-sizing:border-box"></div>
<div class="t c" style="left:58px;width:60px;top:578px;font-size:10.2px;">Buildup</div>
<div style="left:58px;top:597.2px;width:60px;height:12.5px;background:#66ffe8;border:1px solid #333;box-sizing:border-box"></div>
<div class="t" style="left:57.8px;top:614px;font-size:10.2px">Signature</div>
<div style="left:58px;top:631.5px;width:26.8px;height:12.1px;background:#c4c4c4;border:1px solid #333;box-sizing:border-box"></div>
<div class="t c" style="left:58px;width:26.8px;top:629px;font-size:10.2px;">4</div>
<div class="t" style="left:86.4px;top:629px;font-size:10.2px">/</div>
<div style="left:91.2px;top:631.5px;width:26.8px;height:12.1px;background:#c4c4c4;border:1px solid #333;box-sizing:border-box"></div>
<div class="t c" style="left:91.2px;width:26.8px;top:629px;font-size:10.2px;">4</div>
<div class="t" style="left:57.8px;top:651px;font-size:10.2px">Groove</div>
<div style="left:58px;top:670.3px;width:60px;height:12.4px;background:#c4c4c4;border:1px solid #333;box-sizing:border-box"></div>
<div class="t" style="left:60.4px;top:668px;font-size:10.2px;">None</div>
<div style="left:58px;top:687.4px;width:60px;height:12.2px;background:transparent;border:1px solid #3c3c3c;border-radius:6.1px;box-sizing:border-box"></div>
<div class="t c" style="left:58px;width:60px;top:685px;font-size:10.2px;color:#636363">Commit</div>
<div style="left:58px;top:709.3px;width:28.2px;height:12.4px;background:transparent;border:1px solid #333;border-radius:6.2px 0 0 6.2px;box-sizing:border-box"></div>
<div class="t c" style="left:58px;width:28.2px;top:707px;font-size:10.2px;color:#111">&lt;&lt;</div>
<div style="left:90px;top:709.3px;width:28px;height:12.4px;background:transparent;border:1px solid #333;border-radius:0 6.2px 6.2px 0;box-sizing:border-box"></div>
<div class="t c" style="left:90px;width:28px;top:707px;font-size:10.2px;color:#111">&gt;&gt;</div>
<div style="left:58.1px;top:732.1px;width:12.8px;height:12.8px;border-radius:50%;background:#1c212b;"></div>
<div style="left:77.1px;top:732.1px;width:12.8px;height:12.8px;border-radius:50%;background:#ffc80a;"></div>
<div style="left:96.1px;top:732.1px;width:12.8px;height:12.8px;border-radius:50%;background:#1c212b;"></div>
<div class="t c" style="left:58px;width:13px;top:729px;font-size:7.5px;color:#a0a0a0;-webkit-text-stroke:0">L</div>
<div class="t c" style="left:96px;width:13px;top:729px;font-size:7.5px;color:#a0a0a0;-webkit-text-stroke:0">E</div>
<div style="left:128px;top:561px;width:145.2px;height:186px;background:#929292"></div>
<div style="left:128px;top:561px;width:145.2px;height:17.2px;background:#66ffe8"></div>
<div class="t" style="left:131.8px;top:559px;font-weight:bold;font-style:italic;font-size:10.6px">Notes</div>
<div style="left:132.1px;top:580.5px;width:65.9px;height:12.2px;background:#8c8c8c;border:1px solid #3a3a3a;box-sizing:border-box"></div>
<div class="t c" style="left:132.1px;width:65.9px;top:578px;font-size:10.2px;">D#0-G#0</div>
<div style="left:132.1px;top:598.3px;width:30.7px;height:12.4px;background:transparent;border:1px solid #4a4a4a;border-radius:6.2px;box-sizing:border-box"></div>
<div class="t c" style="left:132.1px;width:30.7px;top:596px;font-size:10.2px;color:#666">:2</div>
<div style="left:167.1px;top:598.3px;width:30.9px;height:12.4px;background:transparent;border:1px solid #4a4a4a;border-radius:6.2px;box-sizing:border-box"></div>
<div class="t c" style="left:167.1px;width:30.9px;top:596px;font-size:10.2px;color:#666">*2</div>
<div style="left:132.1px;top:615.2px;width:30.7px;height:12.4px;background:transparent;border:1px solid #4a4a4a;border-radius:6.2px;box-sizing:border-box"></div>
<div class="t c" style="left:132.1px;width:30.7px;top:613px;font-size:10.2px;color:#666">Rev</div>
<div style="left:167.1px;top:615.2px;width:30.9px;height:12.4px;background:transparent;border:1px solid #4a4a4a;border-radius:6.2px;box-sizing:border-box"></div>
<div class="t c" style="left:167.1px;width:30.9px;top:613px;font-size:10.2px;color:#666">Inv</div>
<div style="left:132.1px;top:632.1px;width:65.9px;height:12.7px;background:transparent;border:1px solid #4a4a4a;border-radius:6.35px;box-sizing:border-box"></div>
<div class="t c" style="left:132.1px;width:65.9px;top:630px;font-size:10.2px;color:#666">Legato</div>
<div style="left:132.1px;top:648.9px;width:65.9px;height:12.4px;background:transparent;border:1px solid #4a4a4a;border-radius:6.2px;box-sizing:border-box"></div>
<div class="t c" style="left:132.1px;width:65.9px;top:647px;font-size:10.2px;color:#666">Dupl.Loop</div>
<div class="t" style="left:133px;top:677px;font-size:10.2px">Pgm Change</div>
<div style="left:132.4px;top:696.3px;width:65.6px;height:12.4px;background:#c4c4c4;border:1px solid #333;box-sizing:border-box"></div>
<div class="t" style="left:134.8px;top:694px;font-size:10.2px;">Bank ---</div>
<div style="left:132.4px;top:713.4px;width:65.6px;height:12.3px;background:#c4c4c4;border:1px solid #333;box-sizing:border-box"></div>
<div class="t" style="left:134.8px;top:711px;font-size:10.2px;">Sub ---</div>
<div style="left:132.4px;top:730.3px;width:65.6px;height:12.3px;background:#c4c4c4;border:1px solid #333;box-sizing:border-box"></div>
<div class="t" style="left:134.8px;top:728px;font-size:10.2px;">Pgm ---</div>
<div style="left:202px;top:581px;width:1.4px;height:163px;background:#626262"></div>
<div class="t" style="left:208.4px;top:579px;font-size:10.2px">Start</div>
<div style="left:247.4px;top:581.6px;width:21.4px;height:12px;background:#a8a8a8;border:1px solid #333;border-radius:6px;box-sizing:border-box"></div>
<div class="t c" style="left:247.4px;width:21.4px;top:579px;font-size:10.2px;color:#111">Set</div>
<div style="left:207.9px;top:598.3px;width:25.9px;height:12.4px;background:#c4c4c4;border:1px solid #333;box-sizing:border-box"></div>
<div class="t r" style="left:32.2px;width:200px;top:596px;font-size:10.2px;">1</div>
<div style="left:236.2px;top:598.3px;width:14.6px;height:12.4px;background:#c4c4c4;border:1px solid #333;box-sizing:border-box"></div>
<div class="t r" style="left:49.2px;width:200px;top:596px;font-size:10.2px;">1</div>
<div style="left:253.2px;top:598.3px;width:14.8px;height:12.4px;background:#c4c4c4;border:1px solid #333;box-sizing:border-box"></div>
<div class="t r" style="left:66.4px;width:200px;top:596px;font-size:10.2px;">1</div>
<div class="t" style="left:208.4px;top:613px;font-size:10.2px">End</div>
<div style="left:247.4px;top:615.6px;width:21.4px;height:12px;background:#a8a8a8;border:1px solid #333;border-radius:6px;box-sizing:border-box"></div>
<div class="t c" style="left:247.4px;width:21.4px;top:613px;font-size:10.2px;color:#111">Set</div>
<div style="left:207.9px;top:632px;width:25.9px;height:12.8px;background:#8c8c8c;border:1px solid #3a3a3a;box-sizing:border-box"></div>
<div class="t r" style="left:32.2px;width:200px;top:630px;font-size:10.2px;">9</div>
<div style="left:236.2px;top:632px;width:14.6px;height:12.8px;background:#8c8c8c;border:1px solid #3a3a3a;box-sizing:border-box"></div>
<div class="t r" style="left:49.2px;width:200px;top:630px;font-size:10.2px;">1</div>
<div style="left:253.2px;top:632px;width:14.8px;height:12.8px;background:#8c8c8c;border:1px solid #3a3a3a;box-sizing:border-box"></div>
<div class="t r" style="left:66.4px;width:200px;top:630px;font-size:10.2px;">1</div>
<div style="left:207.9px;top:654.3px;width:60.1px;height:1.5px;background:#646464"></div>
<div style="left:208px;top:662.5px;width:60.8px;height:12.1px;background:#ffc80a;border:1px solid #6a5a20;box-sizing:border-box"></div>
<div class="t c" style="left:208px;width:60.8px;top:660px;font-size:10.2px">Loop</div>
<div class="t" style="left:208.4px;top:677px;font-size:10.2px">Position</div>
<div style="left:247.4px;top:680px;width:21.4px;height:11px;background:#a8a8a8;border:1px solid #333;border-radius:5.5px;box-sizing:border-box"></div>
<div class="t c" style="left:247.4px;width:21.4px;top:677px;font-size:10.2px;color:#111">Set</div>
<div style="left:207.9px;top:697px;width:25.9px;height:11.7px;background:#c4c4c4;border:1px solid #333;box-sizing:border-box"></div>
<div class="t r" style="left:32.2px;width:200px;top:694px;font-size:10.2px;">1</div>
<div style="left:236.2px;top:697px;width:14.6px;height:11.7px;background:#c4c4c4;border:1px solid #333;box-sizing:border-box"></div>
<div class="t r" style="left:49.2px;width:200px;top:694px;font-size:10.2px;">1</div>
<div style="left:253.2px;top:697px;width:14.8px;height:11.7px;background:#c4c4c4;border:1px solid #333;box-sizing:border-box"></div>
<div class="t r" style="left:66.4px;width:200px;top:694px;font-size:10.2px;">1</div>
<div class="t" style="left:208.4px;top:711px;font-size:10.2px">Length</div>
<div style="left:247.4px;top:713.8px;width:21.4px;height:11.5px;background:#a8a8a8;border:1px solid #333;border-radius:5.75px;box-sizing:border-box"></div>
<div class="t c" style="left:247.4px;width:21.4px;top:711px;font-size:10.2px;color:#111">Set</div>
<div style="left:207.9px;top:730.6px;width:25.9px;height:11.9px;background:#c4c4c4;border:1px solid #333;box-sizing:border-box"></div>
<div class="t r" style="left:32.2px;width:200px;top:728px;font-size:10.2px;">8</div>
<div style="left:236.2px;top:730.6px;width:14.6px;height:11.9px;background:#c4c4c4;border:1px solid #333;box-sizing:border-box"></div>
<div class="t r" style="left:49.2px;width:200px;top:728px;font-size:10.2px;">0</div>
<div style="left:253.2px;top:730.6px;width:14.8px;height:11.9px;background:#c4c4c4;border:1px solid #333;box-sizing:border-box"></div>
<div class="t r" style="left:66.4px;width:200px;top:728px;font-size:10.2px;">0</div>
<div style="left:280.1px;top:561px;width:903.5px;height:18.3px;background:#868686"></div>
<div style="left:280.1px;top:579.3px;width:903.5px;height:10.1px;background:#9b9b9b"></div>
<div style="left:280.1px;top:589.4px;width:903.5px;height:11.6px;background:#8d8d8d"></div>
<div style="left:280.1px;top:601px;width:903.5px;height:12px;background:#747474"></div>
<div style="left:280.1px;top:613px;width:903.5px;height:5.8px;background:#606060"></div>
<div style="left:280.1px;top:618.8px;width:903.5px;height:127.8px;background:#a9a9a9"></div>
<div style="left:477.17px;top:618.8px;width:217.16px;height:127.8px;background:#b5b5b5"></div>
<div style="left:911.49px;top:618.8px;width:217.16px;height:127.8px;background:#b5b5b5"></div>
<div style="left:286.66px;top:618.8px;width:1px;height:127.8px;background:#9a9a9a"></div>
<div style="left:286.66px;top:589.4px;width:1px;height:11.6px;background:#808080"></div>
<div style="left:286.66px;top:601px;width:1px;height:12px;background:#6a6a6a"></div>
<div style="left:313.8px;top:618.8px;width:1px;height:127.8px;background:#9a9a9a"></div>
<div style="left:313.8px;top:589.4px;width:1px;height:11.6px;background:#808080"></div>
<div style="left:313.8px;top:601px;width:1px;height:12px;background:#6a6a6a"></div>
<div style="left:340.94px;top:618.8px;width:1px;height:127.8px;background:#9a9a9a"></div>
<div style="left:340.94px;top:589.4px;width:1px;height:11.6px;background:#808080"></div>
<div style="left:340.94px;top:601px;width:1px;height:12px;background:#6a6a6a"></div>
<div style="left:368.09px;top:618.8px;width:1px;height:127.8px;background:#9a9a9a"></div>
<div style="left:368.09px;top:589.4px;width:1px;height:11.6px;background:#808080"></div>
<div style="left:368.09px;top:601px;width:1px;height:12px;background:#6a6a6a"></div>
<div style="left:395.24px;top:618.8px;width:1px;height:127.8px;background:#9a9a9a"></div>
<div style="left:395.24px;top:589.4px;width:1px;height:11.6px;background:#808080"></div>
<div style="left:395.24px;top:601px;width:1px;height:12px;background:#6a6a6a"></div>
<div style="left:422.38px;top:618.8px;width:1px;height:127.8px;background:#9a9a9a"></div>
<div style="left:422.38px;top:589.4px;width:1px;height:11.6px;background:#808080"></div>
<div style="left:422.38px;top:601px;width:1px;height:12px;background:#6a6a6a"></div>
<div style="left:449.52px;top:618.8px;width:1px;height:127.8px;background:#9a9a9a"></div>
<div style="left:449.52px;top:589.4px;width:1px;height:11.6px;background:#808080"></div>
<div style="left:449.52px;top:601px;width:1px;height:12px;background:#6a6a6a"></div>
<div style="left:476.67px;top:618.8px;width:1px;height:127.8px;background:#7e7e7e"></div>
<div style="left:476.67px;top:589.4px;width:1px;height:11.6px;background:#747474"></div>
<div style="left:476.67px;top:601px;width:1px;height:12px;background:#606060"></div>
<div style="left:503.81px;top:618.8px;width:1px;height:127.8px;background:#9a9a9a"></div>
<div style="left:503.81px;top:589.4px;width:1px;height:11.6px;background:#808080"></div>
<div style="left:503.81px;top:601px;width:1px;height:12px;background:#6a6a6a"></div>
<div style="left:530.96px;top:618.8px;width:1px;height:127.8px;background:#9a9a9a"></div>
<div style="left:530.96px;top:589.4px;width:1px;height:11.6px;background:#808080"></div>
<div style="left:530.96px;top:601px;width:1px;height:12px;background:#6a6a6a"></div>
<div style="left:558.11px;top:618.8px;width:1px;height:127.8px;background:#9a9a9a"></div>
<div style="left:558.11px;top:589.4px;width:1px;height:11.6px;background:#808080"></div>
<div style="left:558.11px;top:601px;width:1px;height:12px;background:#6a6a6a"></div>
<div style="left:585.25px;top:618.8px;width:1px;height:127.8px;background:#9a9a9a"></div>
<div style="left:585.25px;top:589.4px;width:1px;height:11.6px;background:#808080"></div>
<div style="left:585.25px;top:601px;width:1px;height:12px;background:#6a6a6a"></div>
<div style="left:612.39px;top:618.8px;width:1px;height:127.8px;background:#9a9a9a"></div>
<div style="left:612.39px;top:589.4px;width:1px;height:11.6px;background:#808080"></div>
<div style="left:612.39px;top:601px;width:1px;height:12px;background:#6a6a6a"></div>
<div style="left:639.54px;top:618.8px;width:1px;height:127.8px;background:#9a9a9a"></div>
<div style="left:639.54px;top:589.4px;width:1px;height:11.6px;background:#808080"></div>
<div style="left:639.54px;top:601px;width:1px;height:12px;background:#6a6a6a"></div>
<div style="left:666.68px;top:618.8px;width:1px;height:127.8px;background:#9a9a9a"></div>
<div style="left:666.68px;top:589.4px;width:1px;height:11.6px;background:#808080"></div>
<div style="left:666.68px;top:601px;width:1px;height:12px;background:#6a6a6a"></div>
<div style="left:693.83px;top:618.8px;width:1px;height:127.8px;background:#7e7e7e"></div>
<div style="left:693.83px;top:589.4px;width:1px;height:11.6px;background:#747474"></div>
<div style="left:693.83px;top:601px;width:1px;height:12px;background:#606060"></div>
<div style="left:720.98px;top:618.8px;width:1px;height:127.8px;background:#9a9a9a"></div>
<div style="left:720.98px;top:589.4px;width:1px;height:11.6px;background:#808080"></div>
<div style="left:720.98px;top:601px;width:1px;height:12px;background:#6a6a6a"></div>
<div style="left:748.12px;top:618.8px;width:1px;height:127.8px;background:#9a9a9a"></div>
<div style="left:748.12px;top:589.4px;width:1px;height:11.6px;background:#808080"></div>
<div style="left:748.12px;top:601px;width:1px;height:12px;background:#6a6a6a"></div>
<div style="left:775.26px;top:618.8px;width:1px;height:127.8px;background:#9a9a9a"></div>
<div style="left:775.26px;top:589.4px;width:1px;height:11.6px;background:#808080"></div>
<div style="left:775.26px;top:601px;width:1px;height:12px;background:#6a6a6a"></div>
<div style="left:802.41px;top:618.8px;width:1px;height:127.8px;background:#9a9a9a"></div>
<div style="left:802.41px;top:589.4px;width:1px;height:11.6px;background:#808080"></div>
<div style="left:802.41px;top:601px;width:1px;height:12px;background:#6a6a6a"></div>
<div style="left:829.56px;top:618.8px;width:1px;height:127.8px;background:#9a9a9a"></div>
<div style="left:829.56px;top:589.4px;width:1px;height:11.6px;background:#808080"></div>
<div style="left:829.56px;top:601px;width:1px;height:12px;background:#6a6a6a"></div>
<div style="left:856.7px;top:618.8px;width:1px;height:127.8px;background:#9a9a9a"></div>
<div style="left:856.7px;top:589.4px;width:1px;height:11.6px;background:#808080"></div>
<div style="left:856.7px;top:601px;width:1px;height:12px;background:#6a6a6a"></div>
<div style="left:883.85px;top:618.8px;width:1px;height:127.8px;background:#9a9a9a"></div>
<div style="left:883.85px;top:589.4px;width:1px;height:11.6px;background:#808080"></div>
<div style="left:883.85px;top:601px;width:1px;height:12px;background:#6a6a6a"></div>
<div style="left:910.99px;top:618.8px;width:1px;height:127.8px;background:#7e7e7e"></div>
<div style="left:910.99px;top:589.4px;width:1px;height:11.6px;background:#747474"></div>
<div style="left:910.99px;top:601px;width:1px;height:12px;background:#606060"></div>
<div style="left:938.13px;top:618.8px;width:1px;height:127.8px;background:#9a9a9a"></div>
<div style="left:938.13px;top:589.4px;width:1px;height:11.6px;background:#808080"></div>
<div style="left:938.13px;top:601px;width:1px;height:12px;background:#6a6a6a"></div>
<div style="left:965.28px;top:618.8px;width:1px;height:127.8px;background:#9a9a9a"></div>
<div style="left:965.28px;top:589.4px;width:1px;height:11.6px;background:#808080"></div>
<div style="left:965.28px;top:601px;width:1px;height:12px;background:#6a6a6a"></div>
<div style="left:992.42px;top:618.8px;width:1px;height:127.8px;background:#9a9a9a"></div>
<div style="left:992.42px;top:589.4px;width:1px;height:11.6px;background:#808080"></div>
<div style="left:992.42px;top:601px;width:1px;height:12px;background:#6a6a6a"></div>
<div style="left:1019.57px;top:618.8px;width:1px;height:127.8px;background:#9a9a9a"></div>
<div style="left:1019.57px;top:589.4px;width:1px;height:11.6px;background:#808080"></div>
<div style="left:1019.57px;top:601px;width:1px;height:12px;background:#6a6a6a"></div>
<div style="left:1046.71px;top:618.8px;width:1px;height:127.8px;background:#9a9a9a"></div>
<div style="left:1046.71px;top:589.4px;width:1px;height:11.6px;background:#808080"></div>
<div style="left:1046.71px;top:601px;width:1px;height:12px;background:#6a6a6a"></div>
<div style="left:1073.86px;top:618.8px;width:1px;height:127.8px;background:#9a9a9a"></div>
<div style="left:1073.86px;top:589.4px;width:1px;height:11.6px;background:#808080"></div>
<div style="left:1073.86px;top:601px;width:1px;height:12px;background:#6a6a6a"></div>
<div style="left:1101.01px;top:618.8px;width:1px;height:127.8px;background:#9a9a9a"></div>
<div style="left:1101.01px;top:589.4px;width:1px;height:11.6px;background:#808080"></div>
<div style="left:1101.01px;top:601px;width:1px;height:12px;background:#6a6a6a"></div>
<div style="left:1128.15px;top:618.8px;width:1px;height:127.8px;background:#7e7e7e"></div>
<div style="left:1128.15px;top:589.4px;width:1px;height:11.6px;background:#747474"></div>
<div style="left:1128.15px;top:601px;width:1px;height:12px;background:#606060"></div>
<div style="left:1155.3px;top:618.8px;width:1px;height:127.8px;background:#9a9a9a"></div>
<div style="left:1155.3px;top:589.4px;width:1px;height:11.6px;background:#808080"></div>
<div style="left:1155.3px;top:601px;width:1px;height:12px;background:#6a6a6a"></div>
<div style="left:1182.44px;top:618.8px;width:1px;height:127.8px;background:#9a9a9a"></div>
<div style="left:1182.44px;top:589.4px;width:1px;height:11.6px;background:#808080"></div>
<div style="left:1182.44px;top:601px;width:1px;height:12px;background:#6a6a6a"></div>
<div style="left:280.1px;top:578.9px;width:903.5px;height:0.9px;background:#262c40"></div>
<div style="left:280.1px;top:589px;width:903.5px;height:0.9px;background:#262c40"></div>
<div class="t" style="left:319.1px;top:565px;font-size:9.8px;color:#1a1a1a">3.2</div>
<div class="t" style="left:373.39px;top:565px;font-size:9.8px;color:#1a1a1a">3.3</div>
<div class="t" style="left:427.68px;top:565px;font-size:9.8px;color:#1a1a1a">3.4</div>
<div class="t" style="left:481.97px;top:565px;font-size:9.8px;color:#1a1a1a">4</div>
<div class="t" style="left:536.26px;top:565px;font-size:9.8px;color:#1a1a1a">4.2</div>
<div class="t" style="left:590.55px;top:565px;font-size:9.8px;color:#1a1a1a">4.3</div>
<div class="t" style="left:644.84px;top:565px;font-size:9.8px;color:#1a1a1a">4.4</div>
<div class="t" style="left:699.13px;top:565px;font-size:9.8px;color:#1a1a1a">5</div>
<div class="t" style="left:753.42px;top:565px;font-size:9.8px;color:#1a1a1a">5.2</div>
<div class="t" style="left:807.71px;top:565px;font-size:9.8px;color:#1a1a1a">5.3</div>
<div class="t" style="left:862px;top:565px;font-size:9.8px;color:#1a1a1a">5.4</div>
<div class="t" style="left:916.29px;top:565px;font-size:9.8px;color:#1a1a1a">6</div>
<div class="t" style="left:970.58px;top:565px;font-size:9.8px;color:#1a1a1a">6.2</div>
<div class="t" style="left:1024.87px;top:565px;font-size:9.8px;color:#1a1a1a">6.3</div>
<div class="t" style="left:1079.16px;top:565px;font-size:9.8px;color:#1a1a1a">6.4</div>
<div class="t" style="left:1133.45px;top:565px;font-size:9.8px;color:#1a1a1a">7</div>
<div style="left:545.8px;top:675px;width:257px;height:8.6px;background:#22283a"></div>
<div style="left:735.8px;top:685.2px;width:127px;height:9.2px;background:#22283a"></div>
<div style="left:857.5px;top:706px;width:127.5px;height:9px;background:#22283a"></div>
<div style="left:952.4px;top:653.8px;width:127.6px;height:8.8px;background:#22283a"></div>
<div style="left:772.9px;top:618.8px;width:1px;height:127.8px;background:#0a0a0a"></div>
<div style="left:767px;top:688.4px;width:13px;height:1px;background:#e8e8e8"></div>
<div style="left:772.9px;top:675px;width:1px;height:19.4px;background:#e8e8e8"></div>
<div class="t r" style="left:983.4px;width:200px;top:727px;font-weight:bold;font-size:18px;color:#505050;letter-spacing:2px">1/8</div>
<div style="left:74.1px;top:762.2px;width:739.7px;height:21.4px;background:#5b5b5b;border-radius:4px"></div>
<div style="left:78px;top:766px;width:732px;height:13.8px;background:#8f8f8f"></div>
<div style="left:826.1px;top:765.2px;width:199.8px;height:15.5px;background:#b4b4b4"></div>
<div style="left:879.1px;top:763px;width:102.7px;height:19.9px;border:2.2px solid #0a0a0a;box-sizing:border-box"></div>
<div style="left:835.4px;top:774.6px;width:14.6px;height:1px;background:#22283a"></div>
<div style="left:909.7px;top:772.9px;width:28.8px;height:1.8px;background:#22283a"></div>
<div style="left:935.8px;top:774.2px;width:9.2px;height:1px;background:#22283a"></div>
<div style="left:945px;top:776.8px;width:15px;height:1px;background:#22283a"></div>
<div style="left:956.6px;top:770.9px;width:13.2px;height:1px;background:#22283a"></div>
<div style="left:934.9px;top:763.2px;width:1px;height:19.8px;background:#0a0a0a"></div>
<div style="left:934.6px;top:773.4px;width:1.8px;height:1.8px;background:#e8e8e8"></div>
<div style="left:1038px;top:762px;width:126px;height:21.8px;background:#5b5b5b;border-radius:4px"></div>
<div class="t" style="left:1043.2px;top:765px;font-weight:bold;font-size:9.5px;color:#0a0a0a">Lead</div>
<div style="left:1068.9px;top:765px;width:20.1px;height:15.8px;background:#a6a6a6"></div>
<div style="left:1068.9px;top:765px;width:20.1px;height:1.6px;background:#8adcd0"></div>
<div style="left:1069px;top:767px;width:2px;height:1.2px;background:#e8c020"></div>
<div style="left:1073px;top:771.4px;width:2.6px;height:3.2px;border:0.7px solid #555;border-left:none;border-top:none;box-sizing:border-box"></div>
<div style="left:1077.6px;top:770.6px;width:2.6px;height:3.2px;border:0.7px solid #555;border-left:none;border-top:none;box-sizing:border-box"></div>
<div style="left:1082px;top:771.4px;width:2.6px;height:3.2px;border:0.7px solid #555;border-left:none;border-top:none;box-sizing:border-box"></div>
<div style="left:1086px;top:770.4px;width:2.6px;height:3.2px;border:0.7px solid #555;border-left:none;border-top:none;box-sizing:border-box"></div>
<div style="left:1077.6px;top:777.4px;width:2.6px;height:3.2px;border:0.7px solid #555;border-left:none;border-top:none;box-sizing:border-box"></div>
<div style="left:1086px;top:777px;width:2.6px;height:3.2px;border:0.7px solid #555;border-left:none;border-top:none;box-sizing:border-box"></div>
<div style="left:1072px;top:773.6px;width:3px;height:0.8px;background:#d8d8d8"></div>
<div style="left:1080.6px;top:773.4px;width:3.4px;height:0.8px;background:#d8d8d8"></div>
<div style="left:1085.4px;top:767.2px;width:3px;height:1.2px;background:#444"></div>
<div style="left:1086px;top:777.6px;width:2.4px;height:1.2px;background:#f08020"></div>
<div style="left:1090.8px;top:765px;width:7.4px;height:15.8px;background:#a6a6a6"></div>
<div style="left:1090.8px;top:765px;width:7.4px;height:1.2px;background:#888"></div>
<div style="left:1090.8px;top:766.6px;width:2.2px;height:1.2px;background:#e8c020"></div>
<div style="left:1096px;top:769.8px;width:2px;height:1.2px;background:#e8c020"></div>
<div style="left:1092px;top:772px;width:2.4px;height:0.8px;background:#555"></div>
<div style="left:1091px;top:775px;width:1.2px;height:1.2px;background:#222"></div>
<div style="left:1095px;top:778px;width:3px;height:1.2px;background:#f08020"></div>
<div style="left:1100px;top:765px;width:12.1px;height:15.8px;background:#a6a6a6"></div>
<div style="left:1100px;top:765px;width:12.1px;height:1.2px;background:#888"></div>
<div style="left:1101.4px;top:771.8px;width:2px;height:1px;background:#e8c020"></div>
<div style="left:1101.8px;top:768.2px;width:1.2px;height:0.8px;background:#555"></div>
<div style="left:1105.2px;top:771.8px;width:2px;height:1px;background:#e8c020"></div>
<div style="left:1105.6px;top:768.2px;width:1.2px;height:0.8px;background:#555"></div>
<div style="left:1109px;top:771.8px;width:2px;height:1px;background:#e8c020"></div>
<div style="left:1109.4px;top:768.2px;width:1.2px;height:0.8px;background:#555"></div>
<div style="left:1105px;top:777.6px;width:1.6px;height:1.2px;background:#e8c020"></div>
<div style="left:1102px;top:777px;width:1px;height:1px;background:#444"></div>
<div style="left:1109px;top:777px;width:1.4px;height:1px;background:#d07020"></div>
<div style="left:1114px;top:765px;width:45px;height:15.8px;background:#a6a6a6"></div>
<div style="left:1114px;top:765px;width:45px;height:1.2px;background:#8c8c8c"></div>
<div style="left:1115px;top:765px;width:1.8px;height:1px;background:#e8c020"></div>
<div style="left:1115px;top:767px;width:5px;height:1.2px;background:#e8c020"></div>
<div style="left:1115px;top:770.6px;width:4px;height:1px;background:#ddd"></div>
<div style="left:1116px;top:774px;width:1.4px;height:1.2px;background:#f08020"></div>
<div style="left:1116px;top:778px;width:2.6px;height:1px;background:#f08020"></div>
<div style="left:1122px;top:768px;width:1.6px;height:1px;background:#666"></div>
<div style="left:1125px;top:770px;width:1.6px;height:1px;background:#666"></div>
<div style="left:1128px;top:768.6px;width:1.6px;height:1px;background:#666"></div>
<div style="left:1130px;top:772px;width:1.6px;height:1px;background:#666"></div>
<div style="left:1124px;top:774px;width:1.6px;height:1px;background:#666"></div>
<div style="left:1129.6px;top:776.6px;width:1.6px;height:1px;background:#666"></div>
<div style="left:1132.7px;top:767px;width:22.3px;height:13.4px;background:#1c212b"></div>
<div style="left:1137px;top:767px;width:1.2px;height:1px;background:#f08020"></div>
<div style="left:1141px;top:767px;width:1.2px;height:1px;background:#f08020"></div>
<div style="left:1146px;top:767px;width:1px;height:1px;background:#8adcd0"></div>
<div style="left:1132.7px;top:774.9px;width:22.3px;height:1.2px;background:#f8700a"></div>
<div style="left:1152px;top:778.6px;width:2.4px;height:1.2px;background:#f08020"></div>
<div style="left:1155.6px;top:770px;width:3px;height:1px;background:#d8b020"></div>
<div style="left:1157px;top:778px;width:1.4px;height:1.4px;background:#e8e8e8"></div>
<svg width="1238" height="831" viewBox="0 0 1238 831">
<rect x="128.2" y="74.6" width="1.6" height="7.8" fill="#111"/>
<rect x="131.3" y="74.6" width="1.3" height="7.8" fill="#111"/>
<rect x="134.4" y="74.6" width="1.0" height="7.8" fill="#111"/>
<rect x="137.5" y="74.6" width="0.8" height="7.8" fill="#111"/>
<rect x="147.6" y="74.6" width="0.8" height="7.8" fill="#111"/>
<rect x="150.6" y="74.6" width="1.0" height="7.8" fill="#111"/>
<rect x="153.6" y="74.6" width="1.3" height="7.8" fill="#111"/>
<rect x="156.6" y="74.6" width="1.6" height="7.8" fill="#111"/>
<circle cx="256.2" cy="78.6" r="2.9" fill="none" stroke="#111" stroke-width="1.1"/>
<circle cx="265.4" cy="78.6" r="3.1" fill="#111"/>
<path d="M278.6 77.4h4.4l-2.2 2.8z" fill="#111"/>
<path d="M324.3 77.2h4.4l-2.2 2.8z" fill="#111"/>
<circle cx="369.4" cy="78.4" r="0.9" fill="#555"/><circle cx="372.4" cy="78.4" r="1.1" fill="#444"/>
<path d="M375.6 75.6v5.6l4.2-2.8z" fill="#111"/>
<path d="M478.8 73.6v9.8l9-4.9z" fill="#4cff14"/>
<rect x="498.4" y="74.3" width="8.4" height="8.4" fill="#0a0a0a"/>
<circle cx="521.5" cy="78.5" r="4.3" fill="#0a0a0a"/>
<path d="M536.4 77.1h3v-3h2.6v3h3v2.6h-3v3h-2.6v-3h-3z" fill="#0a0a0a"/>
<path d="M569.6 79.4l3.6-2.5" stroke="#0a0a0a" stroke-width="1.7" fill="none"/>
<circle cx="568.2" cy="80.5" r="1.7" fill="none" stroke="#0a0a0a" stroke-width="1.4"/><circle cx="574.7" cy="75.9" r="1.8" fill="none" stroke="#0a0a0a" stroke-width="1.4"/>
<path d="M586.4 78.5l4.4-3.2v2.2h4.6v2h-4.6v2.2z" fill="#111"/>
<circle cx="621.5" cy="78.5" r="3.9" fill="none" stroke="#111" stroke-width="1.4"/>
<path d="M788.2 76.2h5l4.6 4.5h5" stroke="#0a0a0a" stroke-width="1.4" fill="none"/>
<path d="M824.4 81.5h-3.6a1.5 1.5 0 0 1-1.5-1.5v-3.8a1.5 1.5 0 0 1 1.5-1.5h9.8a1.5 1.5 0 0 1 1.5 1.5v3.8a1.5 1.5 0 0 1-1.5 1.5h-1.6" stroke="#0a0a0a" stroke-width="1.4" fill="none"/><path d="M825 81.5l3.8-2.8v5.6z" fill="#0a0a0a"/>
<path d="M848.3 80.7h5.4l4-4.5h5" stroke="#0a0a0a" stroke-width="1.4" fill="none"/>
<path d="M992 79.4L998.5 73.1L1002 76.4L995.5 82.7H992z" fill="#0a0a0a"/><path d="M993.2 80L998.7 74.7" stroke="#d8d8d8" stroke-width=".9"/><path d="M992.9 80.6l1.9 1.4h-1.9z" fill="#d0d0d0"/>
<rect x="1010.7" y="73.6" width="8.8" height="9.8" fill="#c4c4c4" stroke="#3c3c3c" stroke-width="1.1"/><rect x="1012.6" y="73.6" width="1.5" height="6.2" fill="#0a0a0a"/><rect x="1016" y="73.6" width="1.5" height="6.2" fill="#0a0a0a"/><rect x="1014.1" y="73.9" width="1.9" height="5.6" fill="#777"/><path d="M1013.4 79.8v3.6M1016.8 79.8v3.6" stroke="#555" stroke-width=".8"/>
<path d="M165.6 147.6v6.2l5-3.1z" fill="none" stroke="#222" stroke-width=".8"/>
<path d="M165.6 166.6v6.2l5-3.1z" fill="none" stroke="#222" stroke-width=".8"/>
<path d="M165.6 185.6v6.2l5-3.1z" fill="none" stroke="#222" stroke-width=".8"/>
<path d="M165.6 204.6v6.2l5-3.1z" fill="none" stroke="#222" stroke-width=".8"/>
<path d="M165.6 223.6v6.2l5-3.1z" fill="none" stroke="#222" stroke-width=".8"/>
<path d="M165.6 242.6v6.2l5-3.1z" fill="none" stroke="#222" stroke-width=".8"/>
<path d="M165.6 261.6v6.2l5-3.1z" fill="none" stroke="#222" stroke-width=".8"/>
<path d="M165.6 280.6v6.2l5-3.1z" fill="none" stroke="#222" stroke-width=".8"/>
<path d="M165.6 299.6v6.2l5-3.1z" fill="none" stroke="#222" stroke-width=".8"/>
<path d="M165.6 318.6v6.2l5-3.1z" fill="none" stroke="#222" stroke-width=".8"/>
<path d="M165.6 337.6v6.2l5-3.1z" fill="none" stroke="#222" stroke-width=".8"/>
<path d="M165.6 356.6v6.2l5-3.1z" fill="none" stroke="#222" stroke-width=".8"/>
<path d="M165.6 375.6v6.2l5-3.1z" fill="none" stroke="#222" stroke-width=".8"/>
<path d="M165.6 394.6v6.2l5-3.1z" fill="none" stroke="#222" stroke-width=".8"/>
<path d="M165.6 413.6v6.2l5-3.1z" fill="none" stroke="#222" stroke-width=".8"/>
<circle cx="86.3" cy="531.8" r="6.3" fill="#2a9ad4" stroke="#1c222a" stroke-width="1"/>
<path d="M83.2 533.6v-2.2a3.1 3.1 0 0 1 6.2 0v2.2" fill="none" stroke="#1c222a" stroke-width="1.2"/><rect x="82.4" y="531.8" width="2" height="3.2" rx=".7" fill="#1c222a"/><rect x="88.2" y="531.8" width="2" height="3.2" rx=".7" fill="#1c222a"/>
<circle cx="56.4" cy="105.6" r="9.4" fill="#5a5a5a"/><path d="M52.1 100v11.2l10.8-5.6z" fill="#777777"/>
<circle cx="56.6" cy="536.7" r="9.4" fill="#5d5d5d"/><path d="M51.6 535.2q2.5-3 5 0t5 0M51.6 539.2q2.5-3 5 0t5 0" fill="none" stroke="#777777" stroke-width="1.5"/>
<ellipse cx="62.3" cy="154" rx="3" ry="2.3" transform="rotate(-20 62.3 154)" fill="#0a0a0a"/><path d="M64.6 153.5v-9.6q.4 2.6 3 4.2q.8 1.4-.2 3.4" stroke="#0a0a0a" stroke-width="1.5" fill="none"/>
<rect x="57.7" y="164.7" width="5.2" height="4.3" rx=".8" fill="none" stroke="#0a0a0a" stroke-width="1.4"/>
<rect x="57.7" y="170.4" width="5.2" height="4.3" rx=".8" fill="none" stroke="#0a0a0a" stroke-width="1.4"/>
<rect x="64.6" y="164.7" width="5.2" height="4.3" rx=".8" fill="none" stroke="#0a0a0a" stroke-width="1.4"/>
<rect x="64.6" y="170.4" width="5.2" height="4.3" rx=".8" fill="none" stroke="#0a0a0a" stroke-width="1.4"/>
<path d="M57.3 188.4L60.5 183.7L66.4 192.6L70.4 188.3" fill="none" stroke="#0a0a0a" stroke-width="1.45"/>
<path d="M57.4 207.6h12.2M58.5 206.5v2.2M60 205.4v4.4M62.7 204.6v6M64.5 204v7.2M67 205.4v4.4M68.5 206.4v2.4" stroke="#050505" stroke-width=".9" fill="none"/>
<rect x="61.5" y="202.6" width="4.2" height="10" rx="1.2" fill="none" stroke="#050505" stroke-width=".8"/>
<path d="M57.4 225.8h12.2M57.4 229.6h12.2" stroke="#050505" stroke-width="1.1"/><rect x="61.6" y="222" width="4" height="9.6" rx=".6" fill="none" stroke="#050505" stroke-width=".9"/>
<rect x="57.4" y="242.5" width="12" height="6.4" rx="1" fill="none" stroke="#050505" stroke-width="1.3"/><path d="M59.6 242.5v-2.2M67.2 242.5v-2.2M59.6 248.9v2.2M67.2 248.9v2.2" stroke="#050505" stroke-width="1.3"/>
<path d="M58.4 264.6l5.3-4.3h3.6q3.2 0 3.2 2.15t-3.2 2.15q3.2 0 3.2 2.15t-3.2 2.15h-3.6z" fill="none" stroke="#050505" stroke-width="1.15" stroke-linejoin="round"/><path d="M63.7 260.3v8.6M67.3 260.3v8.6M67.3 264.6h2" stroke="#050505" stroke-width="1"/>
<rect x="57.4" y="278.9" width="12" height="10" rx=".6" fill="none" stroke="#050505" stroke-width="1.3"/><path d="M61.6 281.1v5.6l4.4-2.8z" fill="#050505"/>
<path d="M57.4 302.6h12.2M58.5 301.7v1.8M60 300.6v4M61.5 301.4v2.4M63 299.4v6.4M64.5 298.2v8.8M66 300v5.2M67.5 300.8v3.6M69 301.8v1.6" stroke="#050505" stroke-width=".95" fill="none"/>
<rect x="56.6" y="353.6" width="13.6" height="12.4" rx="1" fill="none" stroke="#050505" stroke-width="1.3"/><path d="M56.6 363.4h13.6" stroke="#050505" stroke-width="1.2"/>
<path d="M56.6 384.05q0-3.4 4.6-4.4q-1.2-1.6-1.2-3.6a3.4 3.4 0 0 1 6.8 0q0 2-1.2 3.6q4.6 1 4.6 4.4z" fill="none" stroke="#050505" stroke-width="1.2"/>
<path d="M56.8 403.6v-11.8h5.6l1 2h7v9.8z" fill="none" stroke="#050505" stroke-width="1.3"/><path d="M56.8 391.8h5.6l.8 1.6h-6.4z" fill="#666"/>
<path d="M62.1 397.3h2.6M66.1 397.3h2.9M62.1 399.5h2.6M66.1 399.5h2.9M66.1 401.5h2.9" stroke="#050505" stroke-width="1.2"/>
<circle cx="63.4" cy="416.95" r="6.2" fill="none" stroke="#050505" stroke-width="1.1"/><path d="M60.6 416.95h5.6M63.4 414.15v5.6" stroke="#050505" stroke-width="1.2"/>
<circle cx="370.4" cy="112.3" r="4.8" fill="#b4b0b0" stroke="#111" stroke-width=".9"/><path d="M367.4 110.8h6l-3 4.2z" fill="#111"/>
<path d="M307.3 129.4v8.2l8-4.1z" fill="#6a6a6a" stroke="#3c3c3c" stroke-width=".9"/>
<path d="M307.3 147.4v8.2l8-4.1z" fill="#6a6a6a" stroke="#3c3c3c" stroke-width=".9"/>
<path d="M307.3 183.4v8.2l8-4.1z" fill="#6a6a6a" stroke="#3c3c3c" stroke-width=".9"/>
<path d="M307 200.9v9l8.8-4.5z" fill="#4cff14"/>
<path d="M307.3 219.4v8.2l8-4.1z" fill="#6a6a6a" stroke="#3c3c3c" stroke-width=".9"/>
<path d="M307.3 237.4v8.2l8-4.1z" fill="#6a6a6a" stroke="#3c3c3c" stroke-width=".9"/>
<path d="M307.3 255.4v8.2l8-4.1z" fill="#6a6a6a" stroke="#3c3c3c" stroke-width=".9"/>
<circle cx="347.5" cy="316.4" r="6.3" fill="#0c8468" stroke="#3c3c3c" stroke-width=".8"/>
<path d="M347.5 316.4L347.5 310.8A5.6 5.6 0 0 0 345.77 321.73z" fill="#22e8b2"/>
<path d="M317.3 353.39A12 12 0 1 1 329.3 353.39" fill="none" stroke="#111" stroke-width="2.0"/>
<path d="M323.3 343L317.3 353.39" stroke="#111" stroke-width="2.0"/>
<path d="M350.3 370.79A12 12 0 1 1 362.3 370.79" fill="none" stroke="#111" stroke-width="2.0"/>
<path d="M356.3 360.4L350.3 370.79" stroke="#111" stroke-width="2.0"/>
<path d="M317.5 469.79A12 12 0 1 1 329.5 469.79" fill="none" stroke="#111" stroke-width="2.0"/>
<path d="M323.5 459.4L323.5 447.4" stroke="#111" stroke-width="2.0"/>
<path d="M319.3 440.6h8.4l-4.2 5z" fill="#acacac" stroke="#222" stroke-width=".8"/>
<circle cx="323.5" cy="527.4" r="3.5" fill="#0a0a0a"/><path d="M324.5 525.2v2.4q0 1.6-2.2 2" fill="none" stroke="#a4a4a4" stroke-width=".8"/>
<path d="M361.6 434.4l8.6-4v8z" fill="#b0b0b0" stroke="#222" stroke-width=".9"/>
<path d="M383.3 165.4v8.2l8-4.1z" fill="#6a6a6a" stroke="#3c3c3c" stroke-width=".9"/>
<path d="M383 200.9v9l8.8-4.5z" fill="#4cff14"/>
<path d="M383.3 219.4v8.2l8-4.1z" fill="#6a6a6a" stroke="#3c3c3c" stroke-width=".9"/>
<path d="M383.3 237.4v8.2l8-4.1z" fill="#6a6a6a" stroke="#3c3c3c" stroke-width=".9"/>
<path d="M383.3 255.4v8.2l8-4.1z" fill="#6a6a6a" stroke="#3c3c3c" stroke-width=".9"/>
<circle cx="433.4" cy="316.4" r="6.3" fill="#e8dcae" stroke="#3c3c3c" stroke-width=".8"/>
<path d="M433.4 316.4L433.4 310.8A5.6 5.6 0 1 0 436.1 311.49z" fill="#8a7a4c"/>
<path d="M401.3 353.39A12 12 0 1 1 413.3 353.39" fill="none" stroke="#111" stroke-width="2.0"/>
<path d="M407.3 343L401.3 353.39" stroke="#111" stroke-width="2.0"/>
<path d="M434.3 370.79A12 12 0 1 1 446.3 370.79" fill="none" stroke="#111" stroke-width="2.0"/>
<path d="M440.3 360.4L434.3 370.79" stroke="#111" stroke-width="2.0"/>
<path d="M401.5 469.79A12 12 0 1 1 413.5 469.79" fill="none" stroke="#111" stroke-width="2.0"/>
<path d="M404.39 447.81A12 12 0 0 1 407.5 447.4" fill="none" stroke="#f0700c" stroke-width="2.2"/>
<path d="M407.5 459.4L404.39 447.81" stroke="#111" stroke-width="2.0"/>
<path d="M403.2 440.4h8.6l-4.3 5z" fill="#fa6a06" stroke="#5a3410" stroke-width=".6"/>
<circle cx="407.5" cy="527.4" r="3.5" fill="#0a0a0a"/>
<path d="M445.6 497.5l8.6-4v8z" fill="#b0b0b0" stroke="#222" stroke-width=".9"/>
<path d="M478.3 183.4v8.2l8-4.1z" fill="#6a6a6a" stroke="#3c3c3c" stroke-width=".9"/>
<path d="M478 200.9v9l8.8-4.5z" fill="#4cff14"/>
<path d="M478.3 219.4v8.2l8-4.1z" fill="#6a6a6a" stroke="#3c3c3c" stroke-width=".9"/>
<path d="M478.3 237.4v8.2l8-4.1z" fill="#6a6a6a" stroke="#3c3c3c" stroke-width=".9"/>
<path d="M478.3 255.4v8.2l8-4.1z" fill="#6a6a6a" stroke="#3c3c3c" stroke-width=".9"/>
<circle cx="518.5" cy="316.4" r="6.3" fill="#5e7c0a" stroke="#3c3c3c" stroke-width=".8"/>
<path d="M518.5 316.4L518.5 310.8A5.6 5.6 0 1 0 523.41 313.7z" fill="#bfff0a"/>
<path d="M488.3 353.39A12 12 0 1 1 500.3 353.39" fill="none" stroke="#111" stroke-width="2.0"/>
<path d="M494.3 343L488.3 353.39" stroke="#111" stroke-width="2.0"/>
<path d="M521.3 370.79A12 12 0 1 1 533.3 370.79" fill="none" stroke="#111" stroke-width="2.0"/>
<path d="M527.3 360.4L521.3 370.79" stroke="#111" stroke-width="2.0"/>
<path d="M488.5 469.79A12 12 0 1 1 500.5 469.79" fill="none" stroke="#111" stroke-width="2.0"/>
<path d="M494.5 447.4A12 12 0 0 1 505 453.59" fill="none" stroke="#f0700c" stroke-width="2.2"/>
<path d="M494.5 459.4L505 453.59" stroke="#111" stroke-width="2.0"/>
<path d="M490.2 440.4h8.6l-4.3 5z" fill="#fa6a06" stroke="#5a3410" stroke-width=".6"/>
<circle cx="494.5" cy="527.4" r="3.5" fill="#0a0a0a"/>
<path d="M532.6 498.4l8.6-4v8z" fill="#b0b0b0" stroke="#222" stroke-width=".9"/>
<path d="M554 200.9v9l8.8-4.5z" fill="#4cff14"/>
<path d="M554.3 219.4v8.2l8-4.1z" fill="#6a6a6a" stroke="#3c3c3c" stroke-width=".9"/>
<path d="M554.3 237.4v8.2l8-4.1z" fill="#6a6a6a" stroke="#3c3c3c" stroke-width=".9"/>
<path d="M554.3 255.4v8.2l8-4.1z" fill="#6a6a6a" stroke="#3c3c3c" stroke-width=".9"/>
<circle cx="604.4" cy="316.4" r="6.3" fill="#168484" stroke="#3c3c3c" stroke-width=".8"/>
<path d="M604.4 316.4L604.4 310.8A5.6 5.6 0 0 0 603.7 321.96z" fill="#3cf0e4"/>
<path d="M572.3 353.39A12 12 0 1 1 584.3 353.39" fill="none" stroke="#111" stroke-width="2.0"/>
<path d="M578.3 343L572.3 353.39" stroke="#111" stroke-width="2.0"/>
<path d="M605.3 370.79A12 12 0 1 1 617.3 370.79" fill="none" stroke="#111" stroke-width="2.0"/>
<path d="M611.3 360.4L605.3 370.79" stroke="#111" stroke-width="2.0"/>
<path d="M572.5 469.79A12 12 0 1 1 584.5 469.79" fill="none" stroke="#111" stroke-width="2.0"/>
<path d="M578.5 459.4L578.5 447.4" stroke="#111" stroke-width="2.0"/>
<path d="M574.3 440.6h8.4l-4.2 5z" fill="#acacac" stroke="#222" stroke-width=".8"/>
<circle cx="578.5" cy="527.4" r="3.5" fill="#0a0a0a"/><path d="M579.5 525.2v2.4q0 1.6-2.2 2" fill="none" stroke="#a4a4a4" stroke-width=".8"/>
<path d="M616.6 508.6l8.6-4v8z" fill="#d89090" stroke="#a01010" stroke-width=".9"/><circle cx="622.6" cy="509.2" r="2.4" fill="#ff0a0a"/>
<path d="M649.3 165.4v8.2l8-4.1z" fill="#6a6a6a" stroke="#3c3c3c" stroke-width=".9"/>
<path d="M649.3 183.4v8.2l8-4.1z" fill="#6a6a6a" stroke="#3c3c3c" stroke-width=".9"/>
<path d="M649 200.9v9l8.8-4.5z" fill="#4cff14"/>
<path d="M649.3 219.4v8.2l8-4.1z" fill="#6a6a6a" stroke="#3c3c3c" stroke-width=".9"/>
<path d="M649.3 237.4v8.2l8-4.1z" fill="#6a6a6a" stroke="#3c3c3c" stroke-width=".9"/>
<path d="M649.3 255.4v8.2l8-4.1z" fill="#6a6a6a" stroke="#3c3c3c" stroke-width=".9"/>
<circle cx="689.5" cy="316.4" r="6.3" fill="#8a8a8a" stroke="#3c3c3c" stroke-width=".8"/>
<path d="M689.5 316.4L689.5 310.8A5.6 5.6 0 0 0 689.5 322z" fill="#ffffff"/>
<path d="M659.3 353.39A12 12 0 1 1 671.3 353.39" fill="none" stroke="#111" stroke-width="2.0"/>
<path d="M665.3 343L659.3 353.39" stroke="#111" stroke-width="2.0"/>
<path d="M692.3 370.79A12 12 0 1 1 704.3 370.79" fill="none" stroke="#111" stroke-width="2.0"/>
<path d="M698.3 360.4L692.3 370.79" stroke="#111" stroke-width="2.0"/>
<path d="M659.5 469.79A12 12 0 1 1 671.5 469.79" fill="none" stroke="#111" stroke-width="2.0"/>
<path d="M660.91 448.31A12 12 0 0 1 665.5 447.4" fill="none" stroke="#f0700c" stroke-width="2.2"/>
<path d="M665.5 459.4L660.91 448.31" stroke="#111" stroke-width="2.0"/>
<path d="M661.2 440.4h8.6l-4.3 5z" fill="#fa6a06" stroke="#5a3410" stroke-width=".6"/>
<circle cx="665.5" cy="527.4" r="3.5" fill="#0a0a0a"/><path d="M666.5 525.2v2.4q0 1.6-2.2 2" fill="none" stroke="#a4a4a4" stroke-width=".8"/>
<path d="M703.6 442.5l8.6-4v8z" fill="#b0b0b0" stroke="#222" stroke-width=".9"/>
<circle cx="788.4" cy="112.3" r="4.8" fill="#b4b0b0" stroke="#111" stroke-width=".9"/><path d="M785.4 110.8h6l-3 4.2z" fill="#111"/>
<path d="M725.3 129.4v8.2l8-4.1z" fill="#6a6a6a" stroke="#3c3c3c" stroke-width=".9"/>
<path d="M725.3 165.4v8.2l8-4.1z" fill="#6a6a6a" stroke="#3c3c3c" stroke-width=".9"/>
<path d="M725.3 183.4v8.2l8-4.1z" fill="#6a6a6a" stroke="#3c3c3c" stroke-width=".9"/>
<path d="M725 200.9v9l8.8-4.5z" fill="#4cff14"/>
<circle cx="765.5" cy="316.4" r="6.3" fill="#7a6a94" stroke="#3c3c3c" stroke-width=".8"/>
<path d="M765.5 316.4L765.5 310.8A5.6 5.6 0 1 0 767.56 311.19z" fill="#d1bce8"/>
<path d="M735.3 353.39A12 12 0 1 1 747.3 353.39" fill="none" stroke="#111" stroke-width="2.0"/>
<path d="M735.3 353.39A12 12 0 1 1 753.28 342.37" fill="none" stroke="#f0700c" stroke-width="2.2"/>
<path d="M741.3 343L753.28 342.37" stroke="#111" stroke-width="2.0"/>
<path d="M768.3 370.79A12 12 0 1 1 780.3 370.79" fill="none" stroke="#111" stroke-width="2.0"/>
<path d="M774.3 360.4L768.3 370.79" stroke="#111" stroke-width="2.0"/>
<path d="M735.5 469.79A12 12 0 1 1 747.5 469.79" fill="none" stroke="#111" stroke-width="2.0"/>
<path d="M741.5 447.4A12 12 0 0 1 748.63 449.75" fill="none" stroke="#f0700c" stroke-width="2.2"/>
<path d="M741.5 459.4L748.63 449.75" stroke="#111" stroke-width="2.0"/>
<path d="M737.2 440.4h8.6l-4.3 5z" fill="#fa6a06" stroke="#5a3410" stroke-width=".6"/>
<circle cx="741.5" cy="527.4" r="3.5" fill="#0a0a0a"/><path d="M742.5 525.2v2.4q0 1.6-2.2 2" fill="none" stroke="#a4a4a4" stroke-width=".8"/>
<path d="M779.6 439.2l8.6-4v8z" fill="#b0b0b0" stroke="#222" stroke-width=".9"/>
<path d="M801.3 183.4v8.2l8-4.1z" fill="#6a6a6a" stroke="#3c3c3c" stroke-width=".9"/>
<path d="M801 200.9v9l8.8-4.5z" fill="#4cff14"/>
<path d="M801.3 237.4v8.2l8-4.1z" fill="#6a6a6a" stroke="#3c3c3c" stroke-width=".9"/>
<path d="M801.3 255.4v8.2l8-4.1z" fill="#6a6a6a" stroke="#3c3c3c" stroke-width=".9"/>
<circle cx="851.4" cy="316.4" r="6.3" fill="#7c9484" stroke="#3c3c3c" stroke-width=".8"/>
<path d="M851.4 316.4L851.4 310.8A5.6 5.6 0 1 0 853.46 311.19z" fill="#d8fde4"/>
<path d="M819.3 353.39A12 12 0 1 1 831.3 353.39" fill="none" stroke="#111" stroke-width="2.0"/>
<path d="M819.3 353.39A12 12 0 1 1 836.43 338.52" fill="none" stroke="#f0700c" stroke-width="2.2"/>
<path d="M825.3 343L836.43 338.52" stroke="#111" stroke-width="2.0"/>
<path d="M852.3 370.79A12 12 0 1 1 864.3 370.79" fill="none" stroke="#111" stroke-width="2.0"/>
<path d="M852.3 370.79A12 12 0 1 1 868.53 354.13" fill="none" stroke="#f0700c" stroke-width="2.2"/>
<path d="M858.3 360.4L868.53 354.13" stroke="#111" stroke-width="2.0"/>
<path d="M819.5 469.79A12 12 0 1 1 831.5 469.79" fill="none" stroke="#111" stroke-width="2.0"/>
<path d="M825.5 459.4L825.5 447.4" stroke="#111" stroke-width="2.0"/>
<path d="M821.3 440.6h8.4l-4.2 5z" fill="#acacac" stroke="#222" stroke-width=".8"/>
<circle cx="825.5" cy="527.4" r="3.5" fill="#0a0a0a"/>
<path d="M863.6 532.9l8.6-4v8z" fill="#d89090" stroke="#a01010" stroke-width=".9"/><circle cx="869.6" cy="533.5" r="2.4" fill="#ff0a0a"/>
<path d="M896.3 165.4v8.2l8-4.1z" fill="#6a6a6a" stroke="#3c3c3c" stroke-width=".9"/>
<path d="M896.3 183.4v8.2l8-4.1z" fill="#6a6a6a" stroke="#3c3c3c" stroke-width=".9"/>
<path d="M896 200.9v9l8.8-4.5z" fill="#4cff14"/>
<path d="M896.3 255.4v8.2l8-4.1z" fill="#6a6a6a" stroke="#3c3c3c" stroke-width=".9"/>
<circle cx="946.4" cy="316.4" r="6.3" fill="#8a1c74" stroke="#3c3c3c" stroke-width=".8"/>
<path d="M946.4 316.4L946.4 310.8A5.6 5.6 0 1 0 951.73 318.13z" fill="#ff3cd4"/>
<path d="M914.3 353.39A12 12 0 1 1 926.3 353.39" fill="none" stroke="#111" stroke-width="2.0"/>
<path d="M914.3 353.39A12 12 0 0 1 908.63 340.2" fill="none" stroke="#f0700c" stroke-width="2.2"/>
<path d="M920.3 343L908.63 340.2" stroke="#111" stroke-width="2.0"/>
<path d="M947.3 370.79A12 12 0 1 1 959.3 370.79" fill="none" stroke="#111" stroke-width="2.0"/>
<path d="M953.3 360.4L947.3 370.79" stroke="#111" stroke-width="2.0"/>
<path d="M914.5 469.79A12 12 0 1 1 926.5 469.79" fill="none" stroke="#111" stroke-width="2.0"/>
<path d="M920.5 459.4L920.5 447.4" stroke="#111" stroke-width="2.0"/>
<path d="M916.3 440.6h8.4l-4.2 5z" fill="#acacac" stroke="#222" stroke-width=".8"/>
<circle cx="920.5" cy="527.4" r="3.5" fill="#0a0a0a"/><path d="M921.5 525.2v2.4q0 1.6-2.2 2" fill="none" stroke="#a4a4a4" stroke-width=".8"/>
<path d="M958.6 408.8l8.6-4v8z" fill="#b0b0b0" stroke="#222" stroke-width=".9"/>
<path d="M991.3 183.4v8.2l8-4.1z" fill="#6a6a6a" stroke="#3c3c3c" stroke-width=".9"/>
<path d="M991 200.9v9l8.8-4.5z" fill="#4cff14"/>
<path d="M991.3 255.4v8.2l8-4.1z" fill="#6a6a6a" stroke="#3c3c3c" stroke-width=".9"/>
<circle cx="1031.5" cy="316.4" r="6.3" fill="#6c7408" stroke="#3c3c3c" stroke-width=".8"/>
<path d="M1031.5 316.4L1031.5 310.8A5.6 5.6 0 1 0 1036.83 318.13z" fill="#e8f30a"/>
<path d="M1001.3 353.39A12 12 0 1 1 1013.3 353.39" fill="none" stroke="#111" stroke-width="2.0"/>
<path d="M1007.3 343L1001.3 353.39" stroke="#111" stroke-width="2.0"/>
<path d="M1034.3 370.79A12 12 0 1 1 1046.3 370.79" fill="none" stroke="#111" stroke-width="2.0"/>
<path d="M1034.3 370.79A12 12 0 0 1 1028.76 363.69" fill="none" stroke="#f0700c" stroke-width="2.2"/>
<path d="M1040.3 360.4L1028.76 363.69" stroke="#111" stroke-width="2.0"/>
<path d="M1001.5 469.79A12 12 0 1 1 1013.5 469.79" fill="none" stroke="#111" stroke-width="2.0"/>
<path d="M1007.5 459.4L1007.5 447.4" stroke="#111" stroke-width="2.0"/>
<path d="M1003.3 440.6h8.4l-4.2 5z" fill="#acacac" stroke="#222" stroke-width=".8"/>
<circle cx="1007.5" cy="527.4" r="3.5" fill="#0a0a0a"/><path d="M1008.5 525.2v2.4q0 1.6-2.2 2" fill="none" stroke="#a4a4a4" stroke-width=".8"/>
<path d="M1045.6 408.8l8.6-4v8z" fill="#b0b0b0" stroke="#222" stroke-width=".9"/>
<path d="M1069.3 129.2v8.2l8-4.1z" fill="#707070" stroke="#484848" stroke-width=".8"/>
<path d="M1069.3 147.2v8.2l8-4.1z" fill="#707070" stroke="#484848" stroke-width=".8"/>
<path d="M1069.3 165.2v8.2l8-4.1z" fill="#707070" stroke="#484848" stroke-width=".8"/>
<path d="M1069.3 183.2v8.2l8-4.1z" fill="#707070" stroke="#484848" stroke-width=".8"/>
<path d="M1069.3 201.2v8.2l8-4.1z" fill="#707070" stroke="#484848" stroke-width=".8"/>
<path d="M1069.3 219.2v8.2l8-4.1z" fill="#707070" stroke="#484848" stroke-width=".8"/>
<path d="M1069.3 237.2v8.2l8-4.1z" fill="#707070" stroke="#484848" stroke-width=".8"/>
<path d="M1069.3 255.2v8.2l8-4.1z" fill="#707070" stroke="#484848" stroke-width=".8"/>
<path d="M1139.4 312.9v7l6.4-3.5z" fill="#0a0a0a"/><path d="M1146.8 313.8h6M1146.8 316.4h6M1146.8 319h6" stroke="#0a0a0a" stroke-width="1.1"/>
<path d="M1087.5 469.79A12 12 0 1 1 1099.5 469.79" fill="none" stroke="#111" stroke-width="2.0"/>
<path d="M1093.5 459.4L1093.5 447.4" stroke="#111" stroke-width="2.0"/>
<path d="M1089.3 440.6h8.4l-4.2 5z" fill="#acacac" stroke="#222" stroke-width=".8"/>
<path d="M1087.5 527.79A12 12 0 1 1 1105.43 518.65" fill="none" stroke="#2a88d8" stroke-width="2.1"/>
<path d="M1105.28 519.69A12 12 0 0 1 1099.5 527.79" fill="none" stroke="#111" stroke-width="1.7"/>
<path d="M1094.5 517.8L1105.28 519.69" stroke="#111" stroke-width="1.7"/>
<path d="M1090.7 530.4v-1.6a2.8 2.8 0 0 1 5.6 0v1.6" fill="none" stroke="#111" stroke-width="1.1"/><rect x="1089.9" y="528.8" width="1.8" height="2.8" rx=".6" fill="#111"/><rect x="1095.3" y="528.8" width="1.8" height="2.8" rx=".6" fill="#111"/>
<path d="M1131.6 414.4l8.6-4v8z" fill="#b0b0b0" stroke="#222" stroke-width=".9"/>
<circle cx="1181.4" cy="105.4" r="9.4" fill="#555"/><path d="M1176 101.6h10.8M1176 105.4h10.8M1176 109.2h10.8" stroke="#858585" stroke-width="2.1"/>
<circle cx="1181.4" cy="129.3" r="9.4" fill="#555"/><path d="M1177.4 123.8v11M1181.4 123.8v11M1185.4 123.8v11" stroke="#ffc80a" stroke-width="2.6"/>
<path d="M1178.8 526.9l5.2 5.2M1184 526.9l-5.2 5.2" stroke="#848484" stroke-width="1"/>
<circle cx="62.3" cy="568.9" r="6" fill="#f6bc0c" stroke="#a87408" stroke-width="1"/><circle cx="62.3" cy="568.9" r="3.6" fill="none" stroke="#d8a00a" stroke-width=".9"/><path d="M62.3 566.6v4.6" stroke="#c8900a" stroke-width="1.1"/>
<path d="M109.2 601.2h6.2l-3.1 4.6z" fill="#0a0a0a"/>
<circle cx="111.4" cy="659.5" r="6" fill="#a8a8a8" stroke="#222" stroke-width=".9"/><path d="M108.2 660.4a3.3 3.3 0 0 1 5-3.2M114.6 658.6a3.3 3.3 0 0 1-5 3.2" fill="none" stroke="#111" stroke-width="1.1"/><path d="M112.4 655.6l2.2 1.6-2.4 1.2zM110.4 663.4l-2.2-1.6 2.4-1.2z" fill="#111"/>
<path d="M108.6 674.3h6.6l-3.3 4.8z" fill="#0a0a0a"/>
<path d="M82 741.2v-5.4l4-1v5.4" fill="none" stroke="#6a5410" stroke-width="1"/><ellipse cx="81" cy="741.2" rx="1.3" ry="1" fill="#6a5410"/><ellipse cx="85" cy="740.2" rx="1.3" ry="1" fill="#6a5410"/>
<circle cx="261.4" cy="569.3" r="6.2" fill="#a8a8a8" stroke="#222" stroke-width="1"/><path d="M257.6 569.3h5M261.6 566.4l3.4 2.9-3.4 2.9z" stroke="#0a0a0a" stroke-width="1.2" fill="#0a0a0a"/>
<path d="M314.3 579v-4.4h1.6" fill="none" stroke="#262c40" stroke-width=".8"/>
<path d="M341.44 579v-1.6" stroke="#262c40" stroke-width=".8"/>
<path d="M368.59 579v-4.4h1.6" fill="none" stroke="#262c40" stroke-width=".8"/>
<path d="M395.74 579v-1.6" stroke="#262c40" stroke-width=".8"/>
<path d="M422.88 579v-4.4h1.6" fill="none" stroke="#262c40" stroke-width=".8"/>
<path d="M450.02 579v-1.6" stroke="#262c40" stroke-width=".8"/>
<path d="M477.17 579v-4.4h1.6" fill="none" stroke="#262c40" stroke-width=".8"/>
<path d="M504.31 579v-1.6" stroke="#262c40" stroke-width=".8"/>
<path d="M531.46 579v-4.4h1.6" fill="none" stroke="#262c40" stroke-width=".8"/>
<path d="M558.61 579v-1.6" stroke="#262c40" stroke-width=".8"/>
<path d="M585.75 579v-4.4h1.6" fill="none" stroke="#262c40" stroke-width=".8"/>
<path d="M612.89 579v-1.6" stroke="#262c40" stroke-width=".8"/>
<path d="M640.04 579v-4.4h1.6" fill="none" stroke="#262c40" stroke-width=".8"/>
<path d="M667.18 579v-1.6" stroke="#262c40" stroke-width=".8"/>
<path d="M694.33 579v-4.4h1.6" fill="none" stroke="#262c40" stroke-width=".8"/>
<path d="M721.47 579v-1.6" stroke="#262c40" stroke-width=".8"/>
<path d="M748.62 579v-4.4h1.6" fill="none" stroke="#262c40" stroke-width=".8"/>
<path d="M775.76 579v-1.6" stroke="#262c40" stroke-width=".8"/>
<path d="M802.91 579v-4.4h1.6" fill="none" stroke="#262c40" stroke-width=".8"/>
<path d="M830.06 579v-1.6" stroke="#262c40" stroke-width=".8"/>
<path d="M857.2 579v-4.4h1.6" fill="none" stroke="#262c40" stroke-width=".8"/>
<path d="M884.35 579v-1.6" stroke="#262c40" stroke-width=".8"/>
<path d="M911.49 579v-4.4h1.6" fill="none" stroke="#262c40" stroke-width=".8"/>
<path d="M938.63 579v-1.6" stroke="#262c40" stroke-width=".8"/>
<path d="M965.78 579v-4.4h1.6" fill="none" stroke="#262c40" stroke-width=".8"/>
<path d="M992.92 579v-1.6" stroke="#262c40" stroke-width=".8"/>
<path d="M1020.07 579v-4.4h1.6" fill="none" stroke="#262c40" stroke-width=".8"/>
<path d="M1047.21 579v-1.6" stroke="#262c40" stroke-width=".8"/>
<path d="M1074.36 579v-4.4h1.6" fill="none" stroke="#262c40" stroke-width=".8"/>
<path d="M1101.5 579v-1.6" stroke="#262c40" stroke-width=".8"/>
<path d="M1128.65 579v-4.4h1.6" fill="none" stroke="#262c40" stroke-width=".8"/>
<path d="M1155.8 579v-1.6" stroke="#262c40" stroke-width=".8"/>
<path d="M287.16 579v-1.6" stroke="#262c40" stroke-width=".8"/>
<path d="M1182.6 579v-4.4" stroke="#262c40" stroke-width=".8"/>
<path d="M690.3 613.7h7.8l-3.9 4.5z" fill="#f47a0c"/>
<path d="M280.5 724L711.6 724L713.75 723.97L715.9 723.93L718.05 723.89L720.2 723.85L722.35 723.82L724.5 723.77L726.65 723.73L728.8 723.69L730.95 723.64L733.1 723.59L735.25 723.55L737.4 723.49L739.55 723.44L741.7 723.38L743.85 723.33L746 723.27L748.15 723.2L750.3 723.14L752.45 723.07L754.6 722.99L756.75 722.92L758.9 722.84L761.05 722.75L763.2 722.66L765.35 722.57L767.5 722.47L769.65 722.37L771.8 722.26L773.95 722.14L776.1 722.01L778.25 721.88L780.4 721.74L782.55 721.58L784.7 721.42L786.85 721.24L789 721.05L791.15 720.85L793.3 720.62L795.45 720.38L797.6 720.12L799.75 719.83L801.9 719.5L804.05 719.15L806.2 718.75L808.35 718.31L810.5 717.8L812.65 717.23L814.8 716.58L816.95 715.82L819.1 714.92L821.25 713.86L823.4 712.57L825.55 710.98L827.7 708.97L829.85 706.34L832 702.75L834.15 697.56L836.3 689.41L838.45 674.74L840.6 640.5L840.6 640.5L842.02 640.54L843.44 640.57L844.86 640.61L846.28 640.65L847.7 640.69L849.12 640.74L850.54 640.78L851.96 640.83L853.38 640.87L854.8 640.92L856.22 640.97L857.64 641.03L859.06 641.08L860.48 641.14L861.9 641.2L863.32 641.27L864.74 641.33L866.16 641.4L867.58 641.47L869 641.55L870.42 641.63L871.84 641.71L873.26 641.8L874.68 641.9L876.1 641.99L877.52 642.1L878.94 642.21L880.36 642.32L881.78 642.45L883.2 642.58L884.62 642.72L886.04 642.87L887.46 643.03L888.88 643.2L890.3 643.38L891.72 643.58L893.14 643.8L894.56 644.03L895.98 644.29L897.4 644.57L898.82 644.87L900.24 645.21L901.66 645.58L903.08 646L904.5 646.47L905.92 647L907.34 647.6L908.76 648.3L910.18 649.1L911.6 650.05L913.02 651.18L914.44 652.55L915.86 654.25L917.28 656.4L918.7 659.24L920.12 663.12L921.54 668.79L922.96 677.8L924.38 694.38L925.8 735L925.8 735L927.21 734.96L928.63 734.92L930.04 734.88L931.46 734.83L932.88 734.79L934.29 734.74L935.7 734.69L937.12 734.64L938.53 734.59L939.95 734.54L941.37 734.48L942.78 734.42L944.19 734.36L945.61 734.3L947.02 734.23L948.44 734.16L949.86 734.09L951.27 734.02L952.68 733.94L954.1 733.85L955.51 733.77L956.93 733.68L958.35 733.58L959.76 733.48L961.17 733.37L962.59 733.26L964 733.14L965.42 733.01L966.84 732.88L968.25 732.74L969.66 732.58L971.08 732.42L972.5 732.25L973.91 732.06L975.33 731.86L976.74 731.64L978.15 731.41L979.57 731.15L980.99 730.88L982.4 730.57L983.82 730.24L985.23 729.88L986.64 729.47L988.06 729.02L989.48 728.51L990.89 727.94L992.31 727.28L993.72 726.53L995.13 725.66L996.55 724.64L997.97 723.42L999.38 721.95L1000.8 720.12L1002.21 717.81L1003.62 714.78L1005.04 710.64L1006.46 704.64L1007.87 695.18L1009.29 678.01L1010.7 637.3L1010.7 637.3L1014.16 642.83L1017.61 647.93L1021.07 652.64L1024.52 657.01L1027.98 661.08L1031.44 664.87L1034.89 668.41L1038.35 671.72L1041.8 674.83L1045.26 677.76L1048.72 680.51L1052.17 683.11L1055.63 685.57L1059.08 687.9L1062.54 690.11L1066 692.2L1069.45 694.19L1072.91 696.09L1076.36 697.89L1079.82 699.61L1083.28 701.26L1086.73 702.83L1090.19 704.34L1093.64 705.78L1097.1 707.16L1100.56 708.49L1104.01 709.76L1107.47 710.99L1110.92 712.17L1114.38 713.3L1117.84 714.39L1121.29 715.45L1124.75 716.46L1128.2 717.44L1131.66 718.39L1135.12 719.3L1138.57 720.19L1142.03 721.04L1145.48 721.87L1148.94 722.68L1152.4 723.45L1155.85 724.21L1159.31 724.94L1162.76 725.65L1166.22 726.34L1169.68 727.01L1173.13 727.66L1176.59 728.29L1180.04 728.9L1183.5 729.5" fill="none" stroke="#ff1408" stroke-width="2" stroke-linejoin="round"/>
<circle cx="711.6" cy="724" r="2.4" fill="#c8c8c8" stroke="#ff1408" stroke-width="1.3"/>
<circle cx="840.6" cy="640.5" r="2.4" fill="#c8c8c8" stroke="#ff1408" stroke-width="1.3"/>
<circle cx="925.8" cy="735" r="2.4" fill="#c8c8c8" stroke="#ff1408" stroke-width="1.3"/>
<circle cx="1010.7" cy="637.3" r="2.4" fill="#c8c8c8" stroke="#ff1408" stroke-width="1.3"/>
<circle cx="56.4" cy="773.3" r="9.4" fill="#606060"/><path d="M52.1 767.7v11.2l10.8-5.6z" fill="#777777"/>
<circle cx="1181.4" cy="773.3" r="9.4" fill="#606060"/><path d="M1176 778l5.4-10 5.4 10z" fill="#777777"/>
</svg>
</div></body></html>
